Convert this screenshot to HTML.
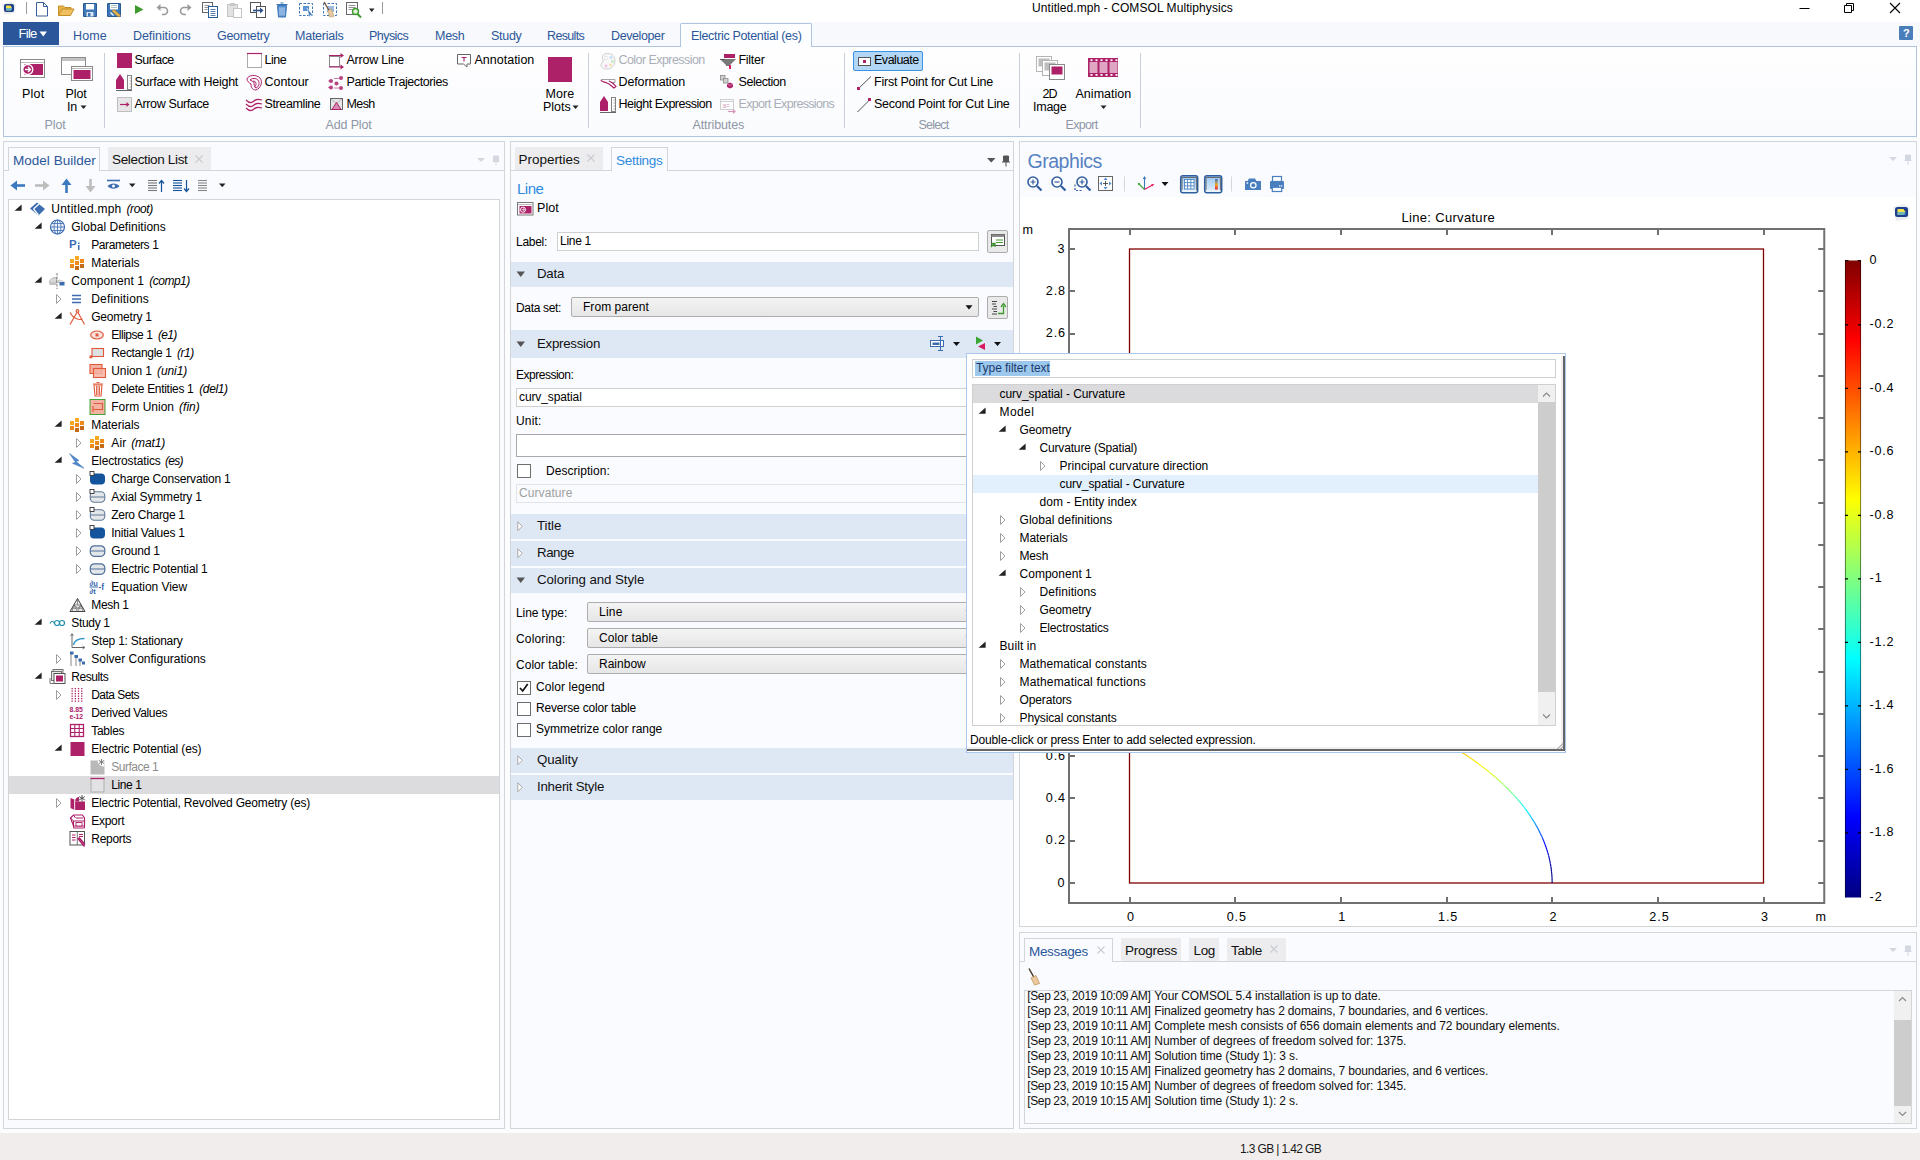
<!DOCTYPE html>
<html><head><meta charset="utf-8"><title>COMSOL</title>
<style>
html,body{margin:0;padding:0;font-family:"Liberation Sans",sans-serif;}
body{width:1920px;height:1160px;overflow:hidden;position:relative;background:#fff;font-family:"Liberation Sans",sans-serif;font-size:12px;color:#000;}
.a{position:absolute;display:block;}
.t{white-space:pre;}
svg{overflow:visible;}
</style></head><body>
<div class="a" style="left:0px;top:0px;width:1920px;height:22px;background:#FFFFFF;"></div>
<div class="a" style="left:0px;top:22px;width:1920px;height:25px;background:#F8F9FC;"></div>
<div class="a" style="left:3px;top:46px;width:1913px;height:90px;background:linear-gradient(#FEFEFF,#FAFBFD);border:1px solid #AEC4DF;box-sizing:border-box;width:1914px;height:91px;"></div>
<div class="a" style="left:0px;top:137px;width:1920px;height:996px;background:#FBFCFE;"></div>
<div class="a" style="left:0px;top:1133px;width:1920px;height:27px;background:#F0EDEC;"></div>
<span class="a t" style="letter-spacing:-0.625px;left:1240px;top:1140.50px;height:16px;line-height:16px;font-size:12px;color:#1a1a1a;">1.3 GB | 1.42 GB</span>
<span class="a t" style="letter-spacing:0.076px;left:1032px;top:0.00px;height:16px;line-height:16px;font-size:12px;color:#000;">Untitled.mph - COMSOL Multiphysics</span>
<svg class="a" style="left:1796px;top:0px;" width="124" height="20" viewBox="0 0 124 20"><path d="M3.5 8.5h10" stroke="#000" stroke-width="1" fill="none"/><path d="M48.5 5.5h7v7h-7z M50.5 5.5v-2h7v7h-2" stroke="#000" stroke-width="1" fill="none"/><path d="M94 3l10 10M104 3l-10 10" stroke="#000" stroke-width="1.1" fill="none"/></svg>
<div class="a" style="left:1899px;top:26px;width:14px;height:14px;background:#4A7EBB;border-radius:1px;"></div>
<span class="a t" style="left:1903px;top:25.50px;height:15px;line-height:15px;font-size:11px;color:#fff;font-weight:bold;">?</span>
<div class="a" style="left:3px;top:141px;width:502px;height:988px;background:#FAFBFE;border:1px solid #D4D5D9;box-sizing:border-box;"></div>
<div class="a" style="left:510px;top:141px;width:504px;height:988px;background:#FAFBFE;border:1px solid #D4D5D9;box-sizing:border-box;"></div>
<div class="a" style="left:1019px;top:141px;width:898px;height:786px;background:#FAFBFE;border:1px solid #D4D5D9;box-sizing:border-box;"></div>
<div class="a" style="left:1019px;top:932px;width:898px;height:197px;background:#FAFBFE;border:1px solid #D4D5D9;box-sizing:border-box;"></div>
<div class="a" style="left:3px;top:22px;width:56px;height:23px;background:#2B579A;"></div>
<span class="a t" style="letter-spacing:-0.718px;left:18.5px;top:25.00px;height:17px;line-height:17px;font-size:13px;color:#fff;">File</span>
<svg class="a" style="left:39px;top:31px;" width="9" height="7" viewBox="0 0 9 7"><path d="M0.5 .5h7.5l-3.750 5z" fill="#fff"/></svg>
<span class="a t" style="letter-spacing:0.152px;left:73px;top:28.25px;height:16.5px;line-height:16.5px;font-size:12.5px;color:#2B579A;">Home</span>
<span class="a t" style="letter-spacing:-0.058px;left:133px;top:28.25px;height:16.5px;line-height:16.5px;font-size:12.5px;color:#2B579A;">Definitions</span>
<span class="a t" style="letter-spacing:-0.299px;left:217px;top:28.25px;height:16.5px;line-height:16.5px;font-size:12.5px;color:#2B579A;">Geometry</span>
<span class="a t" style="letter-spacing:-0.240px;left:295px;top:28.25px;height:16.5px;line-height:16.5px;font-size:12.5px;color:#2B579A;">Materials</span>
<span class="a t" style="letter-spacing:-0.546px;left:369px;top:28.25px;height:16.5px;line-height:16.5px;font-size:12.5px;color:#2B579A;">Physics</span>
<span class="a t" style="letter-spacing:-0.259px;left:435px;top:28.25px;height:16.5px;line-height:16.5px;font-size:12.5px;color:#2B579A;">Mesh</span>
<span class="a t" style="letter-spacing:-0.292px;left:491px;top:28.25px;height:16.5px;line-height:16.5px;font-size:12.5px;color:#2B579A;">Study</span>
<span class="a t" style="letter-spacing:-0.648px;left:547px;top:28.25px;height:16.5px;line-height:16.5px;font-size:12.5px;color:#2B579A;">Results</span>
<span class="a t" style="letter-spacing:-0.398px;left:611px;top:28.25px;height:16.5px;line-height:16.5px;font-size:12.5px;color:#2B579A;">Developer</span>
<div class="a" style="left:680px;top:23px;width:132px;height:24px;background:#FDFEFF;border:1px solid #AEC4DF;box-sizing:border-box;border-bottom:none;border-radius:2px 2px 0 0;"></div>
<span class="a t" style="letter-spacing:-0.332px;left:691px;top:28.25px;height:16.5px;line-height:16.5px;font-size:12.5px;color:#2B579A;">Electric Potential (es)</span>
<div class="a" style="left:104px;top:53px;width:1px;height:75px;background:#C9D0DC;"></div>
<div class="a" style="left:588px;top:53px;width:1px;height:75px;background:#C9D0DC;"></div>
<div class="a" style="left:844px;top:53px;width:1px;height:75px;background:#C9D0DC;"></div>
<div class="a" style="left:1019px;top:53px;width:1px;height:75px;background:#C9D0DC;"></div>
<div class="a" style="left:1140px;top:53px;width:1px;height:75px;background:#C9D0DC;"></div>
<span class="a t" style="letter-spacing:-0.082px;left:44.5px;top:116.75px;height:16.5px;line-height:16.5px;font-size:12.5px;color:#8E97A6;">Plot</span>
<span class="a t" style="letter-spacing:-0.138px;left:325.5px;top:116.75px;height:16.5px;line-height:16.5px;font-size:12.5px;color:#8E97A6;">Add Plot</span>
<span class="a t" style="letter-spacing:-0.113px;left:692.5px;top:116.75px;height:16.5px;line-height:16.5px;font-size:12.5px;color:#8E97A6;">Attributes</span>
<span class="a t" style="letter-spacing:-0.790px;left:918.5px;top:116.75px;height:16.5px;line-height:16.5px;font-size:12.5px;color:#8E97A6;">Select</span>
<span class="a t" style="letter-spacing:-0.668px;left:1065.5px;top:116.75px;height:16.5px;line-height:16.5px;font-size:12.5px;color:#8E97A6;">Export</span>
<span class="a t" style="letter-spacing:0.251px;left:22px;top:85.75px;height:16.5px;line-height:16.5px;font-size:12.5px;color:#000;">Plot</span>
<span class="a t" style="letter-spacing:-0.082px;left:65.5px;top:85.75px;height:16.5px;line-height:16.5px;font-size:12.5px;color:#000;">Plot</span>
<span class="a t" style="letter-spacing:-0.137px;left:67px;top:98.75px;height:16.5px;line-height:16.5px;font-size:12.5px;color:#000;">In</span>
<svg class="a" style="left:80px;top:105px;" width="7" height="5" viewBox="0 0 7 5"><path d="M0.5 0.5h6l-3 3.5z" fill="#222"/></svg>
<span class="a t" style="letter-spacing:0.105px;left:545.5px;top:85.75px;height:16.5px;line-height:16.5px;font-size:12.5px;color:#000;">More</span>
<span class="a t" style="letter-spacing:0.001px;left:543px;top:98.75px;height:16.5px;line-height:16.5px;font-size:12.5px;color:#000;">Plots</span>
<svg class="a" style="left:571.5px;top:105px;" width="7" height="5" viewBox="0 0 7 5"><path d="M0.5 0.5h6l-3 3.5z" fill="#222"/></svg>
<span class="a t" style="letter-spacing:-1.000px;left:1042.5px;top:85.75px;height:16.5px;line-height:16.5px;font-size:12.5px;color:#000;">2D</span>
<span class="a t" style="letter-spacing:-0.238px;left:1033px;top:98.75px;height:16.5px;line-height:16.5px;font-size:12.5px;color:#000;">Image</span>
<span class="a t" style="letter-spacing:0.026px;left:1075.5px;top:85.75px;height:16.5px;line-height:16.5px;font-size:12.5px;color:#000;">Animation</span>
<svg class="a" style="left:1100px;top:105px;" width="7" height="5" viewBox="0 0 7 5"><path d="M0.5 0.5h6l-3 3.5z" fill="#222"/></svg>
<div class="a" style="left:853px;top:51px;width:70px;height:20px;background:#B3D6F5;border:1px solid #3A94E6;box-sizing:border-box;border-radius:2px;"></div>
<span class="a t" style="letter-spacing:-0.549px;left:134.5px;top:51.75px;height:16.5px;line-height:16.5px;font-size:12.5px;color:#000;">Surface</span>
<span class="a t" style="letter-spacing:-0.255px;left:134.5px;top:73.75px;height:16.5px;line-height:16.5px;font-size:12.5px;color:#000;">Surface with Height</span>
<span class="a t" style="letter-spacing:-0.367px;left:134.5px;top:95.75px;height:16.5px;line-height:16.5px;font-size:12.5px;color:#000;">Arrow Surface</span>
<span class="a t" style="letter-spacing:-0.447px;left:264.5px;top:51.75px;height:16.5px;line-height:16.5px;font-size:12.5px;color:#000;">Line</span>
<span class="a t" style="letter-spacing:-0.031px;left:264.5px;top:73.75px;height:16.5px;line-height:16.5px;font-size:12.5px;color:#000;">Contour</span>
<span class="a t" style="letter-spacing:-0.383px;left:264.5px;top:95.75px;height:16.5px;line-height:16.5px;font-size:12.5px;color:#000;">Streamline</span>
<span class="a t" style="letter-spacing:-0.217px;left:346.5px;top:51.75px;height:16.5px;line-height:16.5px;font-size:12.5px;color:#000;">Arrow Line</span>
<span class="a t" style="letter-spacing:-0.398px;left:346.5px;top:73.75px;height:16.5px;line-height:16.5px;font-size:12.5px;color:#000;">Particle Trajectories</span>
<span class="a t" style="letter-spacing:-0.593px;left:346.5px;top:95.75px;height:16.5px;line-height:16.5px;font-size:12.5px;color:#000;">Mesh</span>
<span class="a t" style="letter-spacing:0.002px;left:474.5px;top:51.75px;height:16.5px;line-height:16.5px;font-size:12.5px;color:#000;">Annotation</span>
<span class="a t" style="letter-spacing:-0.559px;left:618.5px;top:51.75px;height:16.5px;line-height:16.5px;font-size:12.5px;color:#A9AEB8;">Color Expression</span>
<span class="a t" style="letter-spacing:-0.129px;left:618.5px;top:73.75px;height:16.5px;line-height:16.5px;font-size:12.5px;color:#000;">Deformation</span>
<span class="a t" style="letter-spacing:-0.478px;left:618.5px;top:95.75px;height:16.5px;line-height:16.5px;font-size:12.5px;color:#000;">Height Expression</span>
<span class="a t" style="letter-spacing:-0.296px;left:738.5px;top:51.75px;height:16.5px;line-height:16.5px;font-size:12.5px;color:#000;">Filter</span>
<span class="a t" style="letter-spacing:-0.455px;left:738.5px;top:73.75px;height:16.5px;line-height:16.5px;font-size:12.5px;color:#000;">Selection</span>
<span class="a t" style="letter-spacing:-0.670px;left:738.5px;top:95.75px;height:16.5px;line-height:16.5px;font-size:12.5px;color:#A9AEB8;">Export Expressions</span>
<span class="a t" style="letter-spacing:-0.220px;left:874px;top:73.75px;height:16.5px;line-height:16.5px;font-size:12.5px;color:#000;">First Point for Cut Line</span>
<span class="a t" style="letter-spacing:-0.277px;left:874px;top:95.75px;height:16.5px;line-height:16.5px;font-size:12.5px;color:#000;">Second Point for Cut Line</span>
<span class="a t" style="letter-spacing:-0.479px;left:874px;top:51.75px;height:16.5px;line-height:16.5px;font-size:12.5px;color:#000;">Evaluate</span>
<svg class="a" style="left:0px;top:0px;" width="400" height="20" viewBox="0 0 400 20"><path d="M2 4.500l9-3 5 3.500-1.500 8-10 1.500z" fill="#E9EAEE"/><rect x="4" y="4" width="10" height="8" rx="2" fill="#1D3F8C"/><path d="M6 5.500h4.500l1.500 2.500-1.500 2.500h-4.500z" fill="#F5E24A"/><path d="M6 8h6v2.500h-6z" fill="#3FA6E0" opacity=".75"/><path d="M26.5 2v12" stroke="#9a9a9a" stroke-width="1"/><path d="M36.5 2.5h7l4 4v9.5h-11z" fill="#fff" stroke="#3A5F9A" stroke-width="1"/><path d="M43.5 2.5v4h4" fill="none" stroke="#3A5F9A"/><path d="M58.5 15.5v-9.5h5l1.5 1.5h6v2" fill="#E9B44C" stroke="#C58F28"/><path d="M58.5 15.5l3.5-6.5h12l-3.5 6.5z" fill="#F0C060" stroke="#C58F28"/><path d="M83.5 3.5h13v13h-13z" fill="#3E78B8" stroke="#2C5C96"/><rect x="86" y="4" width="8" height="5.5" fill="#fff"/><rect x="86.5" y="12" width="7" height="4.5" fill="#DDE6F2"/><rect x="88" y="13" width="2.5" height="3.5" fill="#3E78B8"/><path d="M107.5 3.5h13v13h-13z" fill="#3E78B8" stroke="#2C5C96"/><rect x="110" y="4" width="8" height="5.5" fill="#fff"/><path d="M111 5.5h6M111 7.5h6" stroke="#8aa" stroke-width=".7"/><path d="M112 11l6.5 6 2-1.5-6.5-6z" fill="#E8B34B" stroke="#C58F28" stroke-width=".6"/><path d="M110.5 12.5l3 3" stroke="#fff" stroke-width="1.2"/><path d="M135 5l8.5 4.5-8.5 4.5z" fill="#3D9A2C"/><path d="M158 7.5h6a3.5 3.5 0 0 1 0 7h-2" fill="none" stroke="#9A9A9A" stroke-width="1.6"/><path d="M156.5 7.5l4-3.5v7z" fill="#9A9A9A"/><path d="M190 7.5h-6a3.5 3.5 0 0 0 0 7h2" fill="none" stroke="#9A9A9A" stroke-width="1.6"/><path d="M191.5 7.5l-4-3.5v7z" fill="#9A9A9A"/><rect x="202.500" y="2.500" width="10" height="10" fill="#fff" stroke="#666"/><path d="M204.500 5.500h5M204.500 7.500h5M204.500 9.500h3" stroke="#777" stroke-width=".8"/><rect x="208.500" y="6.500" width="9" height="11" fill="#fff" stroke="#2C5C96"/><path d="M210.500 9.500h5M210.500 11.500h5M210.500 13.500h5M210.500 15.500h5" stroke="#2C5C96" stroke-width=".8"/><rect x="227.500" y="4.500" width="10" height="12" fill="#E2E2E2" stroke="#C4C4C4"/><rect x="230" y="3" width="5" height="3" fill="#C8C8C8"/><rect x="233.500" y="8.500" width="8" height="9" fill="#fff" stroke="#C4C4C4"/><rect x="250.500" y="2.500" width="10" height="10" fill="#fff" stroke="#555"/><rect x="256.500" y="6.500" width="9" height="11" fill="#fff" stroke="#555"/><path d="M253 10.500h8" stroke="#2B4F8A" stroke-width="1.6"/><path d="M260 7.500l3.500 3-3.500 3z" fill="#2B4F8A"/><path d="M277.500 5.500h9l-1 11.500h-7z" fill="#5B93D3" stroke="#3A75B5"/><path d="M276.500 4.500h11M280.500 3h3" stroke="#3A75B5" stroke-width="1.2"/><path d="M280 7.500v8M282 7.500v8M284 7.500v8" stroke="#DCE9F8" stroke-width=".8"/><rect x="299.500" y="3.500" width="13" height="12" fill="none" stroke="#3A75B5" stroke-dasharray="2.5 1.5"/><rect x="303" y="6" width="6" height="5" fill="#5B93D3"/><path d="M307 8l6 7.500-2.500-.5-1 2.500z" fill="#3A75B5" stroke="#fff" stroke-width=".5"/><rect x="323.500" y="3.500" width="13" height="12" fill="none" stroke="#3A75B5" stroke-dasharray="2.5 1.5"/><path d="M327 6h7v6h-7z" fill="#9CBCE4"/><path d="M324 2l6 10" stroke="#7A5A3A" stroke-width="1.4"/><path d="M327.500 11l4-2 2.500 7.500-4.500.5z" fill="#E7C9A0" stroke="#B08A5A" stroke-width=".5"/><rect x="346.500" y="2.500" width="11" height="12" fill="#fff" stroke="#666"/><path d="M348.500 5.500h7M348.500 7.500h7M348.500 9.500h4" stroke="#777" stroke-width=".8"/><circle cx="355.500" cy="11.500" r="3" fill="#DFF2D8" stroke="#3D9A2C" stroke-width="1.4"/><path d="M357.500 14l3.500 3.500" stroke="#3D9A2C" stroke-width="2"/><path d="M369 8.500h5.500l-2.750 3.500z" fill="#222"/><path d="M382.500 2v12" stroke="#9a9a9a" stroke-width="1"/></svg>
<svg class="a" style="left:0px;top:46px;" width="1200" height="90" viewBox="0 46 1200 90"><rect x="20.500" y="59.500" width="24" height="18" fill="#fff" stroke="#8A8A8A"/><path d="M21 62.500h23" stroke="#BDBDBD"/><rect x="24.500" y="64" width="18.500" height="11" fill="#AD2169"/><circle cx="27.800" cy="69.500" r="5" fill="#AD2169" stroke="#fff" stroke-width="1.300"/><path d="M25 69.500h5M28 67l2.500 2.500-2.500 2.500" stroke="#fff" stroke-width="1.400" fill="none"/><rect x="61.500" y="57.500" width="24" height="17" fill="#fff" stroke="#8A8A8A"/><rect x="62" y="58" width="23" height="3" fill="#C2C2C2"/><rect x="71.500" y="66.500" width="21" height="14" fill="#fff" stroke="#8A8A8A"/><path d="M72 68.500h20" stroke="#BDBDBD"/><rect x="73.500" y="70" width="17" height="9" fill="#AD2169"/><rect x="548" y="57" width="24" height="25" fill="#AD2169"/><rect x="1036.500" y="56.500" width="15" height="15" fill="#fff" stroke="#B5B5B5"/><rect x="1038.500" y="58.500" width="11" height="8" fill="#BDBDBD"/><rect x="1042.500" y="60.500" width="15" height="15" fill="#fff" stroke="#B5B5B5"/><rect x="1044.500" y="62.500" width="11" height="8" fill="#BDBDBD"/><rect x="1049.500" y="64.500" width="15" height="15" fill="#fff" stroke="#8A8A8A"/><rect x="1051.500" y="66.500" width="11" height="8" fill="#AD2169"/><rect x="1088" y="58" width="30" height="19" fill="#AD2169"/><rect x="1089.5" y="62" width="8" height="11" fill="#DFA5C3"/><rect x="1099.5" y="62" width="8" height="11" fill="#DFA5C3"/><rect x="1109.5" y="62" width="8" height="11" fill="#DFA5C3"/><rect x="1090.5" y="59.300" width="2" height="1.800" fill="#fff"/><rect x="1090.5" y="74" width="2" height="1.800" fill="#fff"/><rect x="1095.5" y="59.300" width="2" height="1.800" fill="#fff"/><rect x="1095.5" y="74" width="2" height="1.800" fill="#fff"/><rect x="1100.5" y="59.300" width="2" height="1.800" fill="#fff"/><rect x="1100.5" y="74" width="2" height="1.800" fill="#fff"/><rect x="1105.5" y="59.300" width="2" height="1.800" fill="#fff"/><rect x="1105.5" y="74" width="2" height="1.800" fill="#fff"/><rect x="1110.5" y="59.300" width="2" height="1.800" fill="#fff"/><rect x="1110.5" y="74" width="2" height="1.800" fill="#fff"/><rect x="1115.5" y="59.300" width="2" height="1.800" fill="#fff"/><rect x="1115.5" y="74" width="2" height="1.800" fill="#fff"/><rect x="117" y="53" width="15" height="15" fill="#AD2169"/><path d="M116 89v-9l4-6 4 6v9z" fill="#AD2169"/><rect x="127.5" y="75.5" width="4" height="14" fill="#fff" stroke="#777" stroke-width=".9"/><path d="M129.5 78h2M129.5 81h2M129.5 84h2M129.5 87h2" stroke="#777" stroke-width=".6"/><path d="M116 90.5h16" stroke="#666" stroke-width="1"/><rect x="117.500" y="97.500" width="14" height="14" fill="#E6E6E6" stroke="#BFBFBF"/><path d="M120 104.500h8" stroke="#AD2169" stroke-width="1.2"/><path d="M126.500 102l3 2.500-3 2.500z" fill="#AD2169"/><rect x="247.500" y="53.500" width="14" height="14" fill="#fff" stroke="#ABABAB"/><path d="M247 53.500h15" stroke="#AD2169" stroke-width="1.2"/><g fill="none" stroke="#AD2169" stroke-width="1"><path d="M247 79c1-4 9-5 13-1 3 4 1 10-4 12-4 0-5-3-5-6-2-1-4-3-4-5z"/><path d="M250 80c2-2 6-2 8 0 2 3 1 7-2 8-2-1-2-4-2-6z"/><path d="M253 81.500c1-.8 3 0 3 2s-.5 3-1.500 3.500"/></g><g fill="none" stroke="#AD2169" stroke-width="1.2"><path d="M246 100c3 3 6 3 8 1s5-2 8-1"/><path d="M246 104c3 3 6 3 8 1s5-2 8-1"/><path d="M246 108c3 3 6 3 8 1s5-2 8-1"/></g><rect x="329.500" y="56.500" width="10" height="10" fill="#fff" stroke="#8A8A8A"/><path d="M329 55.500h12M329 67h12" stroke="#AD2169" stroke-width="1.2"/><path d="M340.500 53l3.500 2.500-3.500 2.500zM340.500 64.500l3.500 2.500-3.500 2.500z" fill="#AD2169"/><g fill="#AD2169" opacity=".85"><circle cx="331" cy="81" r="2"/><circle cx="341" cy="78" r="2"/><circle cx="336.500" cy="83.500" r="2"/><circle cx="331" cy="87.500" r="2"/><circle cx="341" cy="88" r="2"/></g><path d="M328 81h2M334 78.500h5M328 87.500h2M334 88h5" stroke="#AD2169" stroke-width=".8" opacity=".7"/><rect x="330.500" y="98.500" width="12" height="11" fill="#E6E6E6" stroke="#666"/><path d="M331 99l5.500 4.500 5.500-4.500" fill="none" stroke="#999" stroke-width=".7"/><path d="M332 109.500l4.500-7 4.500 7z" fill="#D98BB2" stroke="#AD2169" stroke-width="1"/><path d="M457.500 54.500h13v9.500h-3.500v3l-3.500-3h-6z" fill="#fff" stroke="#666"/><path d="M461.500 57.500h5M464 57.500v4" stroke="#AD2169" stroke-width="1.100"/><g opacity=".55"><path d="M608 53.500c4 0 7 3 7 7.500 0 5-4 8-8 8-3.500 0-6-1.500-6-4 0-2 2-2 2-4s-1-2.500-.5-4.500 2.500-3 5.500-3z" fill="#F4F4F4" stroke="#AAA"/><circle cx="606" cy="58" r="1.700" fill="#fff" stroke="#BBB" stroke-width=".6"/><circle cx="611" cy="57.500" r="1.400" fill="#9CC8F0"/><circle cx="612.500" cy="61.500" r="1.400" fill="#9AD89A"/><circle cx="610.500" cy="65" r="1.400" fill="#F6C36A"/><circle cx="606" cy="66" r="1.400" fill="#F08ACB"/></g><path d="M601 79.500h14v3h-5" fill="#fff" stroke="#999" stroke-width=".9"/><path d="M601 80c0 1.500 3 2 6 3s5 3.500 7 5l2-1.500c-2-2.500-4-4.500-7-5.500" fill="#fff" stroke="#AD2169" stroke-width="1.200"/><path d="M600 111v-9l4-6 4 6v9z" fill="#AD2169"/><rect x="611.5" y="97.5" width="4" height="14" fill="#fff" stroke="#777" stroke-width=".9"/><path d="M613.5 100h2M613.5 103h2M613.5 106h2M613.5 109h2" stroke="#777" stroke-width=".6"/><path d="M600 112.5h16" stroke="#666" stroke-width="1"/><rect x="724" y="54" width="11" height="4" fill="#AD2169"/><path d="M720 59h16l-6 6v1h-4v-1z" fill="#7A7A7A"/><path d="M720 59.500h5" stroke="#555" stroke-width="1"/><rect x="729" y="65" width="2" height="4" fill="#D81B60"/><g fill="#D0D0D0" stroke="#8A8A8A" stroke-width=".8"><rect x="720.500" y="75.500" width="4.500" height="4.500"/><rect x="723.500" y="78.500" width="4.500" height="4.500"/></g><path d="M727 84l3-1.500 3 1.500v3l-3 1.500-3-1.500z" fill="#AD2169"/><path d="M727 84l3 1.500 3-1.500" fill="none" stroke="#E7A9C7" stroke-width=".6"/><g opacity=".45"><rect x="720.500" y="99.500" width="13" height="10" fill="#fff" stroke="#999"/><path d="M721 101.500h12" stroke="#999"/><text x="722.500" y="108" font-size="6.500" fill="#AD2169" font-family="Liberation Sans">a=</text><path d="M728 111.500h6" stroke="#AD2169" stroke-width="1.200"/><path d="M733 109l3 2.500-3 2.500z" fill="#AD2169"/></g></svg>
<svg class="a" style="left:850px;top:46px;" width="30" height="90" viewBox="850 46 30 90"><rect x="858.500" y="57.500" width="12" height="8" fill="#fff" stroke="#555"/><rect x="863" y="60" width="3" height="3" fill="#AD2169"/><path d="M858.500 88.500l12.500-12" stroke="#555" stroke-width="1"/><rect x="857" y="87" width="3" height="3" fill="#AD2169"/><path d="M857.500 112l12-12" stroke="#555" stroke-width="1"/><rect x="868" y="98" width="3" height="3" fill="#AD2169"/></svg>
<div class="a" style="left:8px;top:147px;width:92px;height:24px;background:#FAFBFE;border:1px solid #D4D5D9;box-sizing:border-box;border-bottom:none;"></div>
<div class="a" style="left:4px;top:170px;width:500px;height:1px;background:#D4D5D9;"></div>
<div class="a" style="left:9px;top:170px;width:90px;height:1px;background:#FAFBFE;"></div>
<span class="a t" style="letter-spacing:0.021px;left:13px;top:152.05px;height:17.5px;line-height:17.5px;font-size:13.5px;color:#2B579A;">Model Builder</span>
<div class="a" style="left:108px;top:147px;width:103px;height:23px;background:#ECECEE;"></div>
<span class="a t" style="letter-spacing:-0.346px;left:112px;top:151.05px;height:17.5px;line-height:17.5px;font-size:13.5px;color:#111;">Selection List</span>
<svg class="a" style="left:194px;top:154px;" width="10" height="10" viewBox="0 0 10 10"><path d="M1.500 1.500l7 7M8.500 1.500l-7 7" stroke="#C9CCD3" stroke-width="1.1"/></svg>
<svg class="a" style="left:476px;top:154px;" width="26" height="12" viewBox="0 0 26 12"><path d="M1 4h8l-4 4z" fill="#D3D7E0"/><path d="M17.500 2h5v5h-5zM16.500 7.500h7M20 7.500v4" stroke="#D3D7E0" fill="#D3D7E0" stroke-width="1"/></svg>
<svg class="a" style="left:0px;top:174px;" width="240" height="24" viewBox="0 174 240 24"><path d="M14 185.500h11" stroke="#3B7ABF" stroke-width="2.600"/><path d="M10.500 185.500l6.500-5v10z" fill="#3B7ABF"/><path d="M35 185.500h11" stroke="#BDBDBD" stroke-width="2.600"/><path d="M49.500 185.500l-6.500-5v10z" fill="#BDBDBD"/><path d="M66.500 182v11" stroke="#3B7ABF" stroke-width="2.600"/><path d="M66.500 178.500l-5 6.500h10z" fill="#3B7ABF"/><path d="M90.500 179v10" stroke="#BDBDBD" stroke-width="2.600"/><path d="M90.500 192.500l-5-6.500h10z" fill="#BDBDBD"/><path d="M107 180.500h13" stroke="#3D6CB0" stroke-width="1.600"/><path d="M107.500 186c3-3.500 9-3.500 12 0-3 3.500-9 3.500-12 0z" fill="#3D6CB0"/><circle cx="113.500" cy="186" r="1.500" fill="#fff"/><path d="M129 183.500h6.500l-3.250 3.800z" fill="#222"/><path d="M148 180.5h9" stroke="#777" stroke-width="1.100"/><path d="M148 183h9" stroke="#777" stroke-width="1.100"/><path d="M148 185.5h9" stroke="#777" stroke-width="1.100"/><path d="M148 188h9" stroke="#777" stroke-width="1.100"/><path d="M148 190.5h9" stroke="#777" stroke-width="1.100"/><path d="M161.500 192v-11M159 183.500l2.500-3 2.500 3" stroke="#14549C" stroke-width="1.200" fill="none"/><path d="M173 180.5h9" stroke="#14549C" stroke-width="1.100"/><path d="M173 183h9" stroke="#14549C" stroke-width="1.100"/><path d="M173 185.5h9" stroke="#14549C" stroke-width="1.100"/><path d="M173 188h9" stroke="#14549C" stroke-width="1.100"/><path d="M173 190.5h9" stroke="#14549C" stroke-width="1.100"/><path d="M186.500 180v11M184 188.500l2.500 3 2.500-3" stroke="#14549C" stroke-width="1.200" fill="none"/><path d="M198 180.5h9" stroke="#888" stroke-width="1.100"/><path d="M198 183h9" stroke="#888" stroke-width="1.100"/><path d="M198 185.5h9" stroke="#888" stroke-width="1.100"/><path d="M198 188h9" stroke="#888" stroke-width="1.100"/><path d="M198 190.5h9" stroke="#888" stroke-width="1.100"/><path d="M219 183.500h6.500l-3.250 3.800z" fill="#222"/></svg>
<div class="a" style="left:8px;top:199px;width:492px;height:921px;background:#fff;border:1px solid #D4D5D9;box-sizing:border-box;"></div>
<div class="a" style="left:9px;top:776px;width:490px;height:18px;background:#DCDCDE;"></div>
<span class="a t" style="letter-spacing:0.243px;left:51.25px;top:201.00px;height:16px;line-height:16px;font-size:12px;color:#000;">Untitled.mph</span>
<span class="a t" style="letter-spacing:-0.374px;left:126.5px;top:201.00px;height:16px;line-height:16px;font-size:12px;color:#000;font-style:italic;">(root)</span>
<span class="a t" style="letter-spacing:0.029px;left:71.25px;top:219.00px;height:16px;line-height:16px;font-size:12px;color:#000;">Global Definitions</span>
<span class="a t" style="letter-spacing:-0.407px;left:91.25px;top:237.00px;height:16px;line-height:16px;font-size:12px;color:#000;">Parameters 1</span>
<span class="a t" style="letter-spacing:-0.048px;left:91.25px;top:255.00px;height:16px;line-height:16px;font-size:12px;color:#000;">Materials</span>
<span class="a t" style="letter-spacing:0.075px;left:71.25px;top:273.00px;height:16px;line-height:16px;font-size:12px;color:#000;">Component 1</span>
<span class="a t" style="letter-spacing:-0.494px;left:149.25px;top:273.00px;height:16px;line-height:16px;font-size:12px;color:#000;font-style:italic;">(comp1)</span>
<span class="a t" style="letter-spacing:0.152px;left:91.25px;top:291.00px;height:16px;line-height:16px;font-size:12px;color:#000;">Definitions</span>
<span class="a t" style="letter-spacing:-0.211px;left:91.25px;top:309.00px;height:16px;line-height:16px;font-size:12px;color:#000;">Geometry 1</span>
<span class="a t" style="letter-spacing:-0.476px;left:111.25px;top:327.00px;height:16px;line-height:16px;font-size:12px;color:#000;">Ellipse 1</span>
<span class="a t" style="letter-spacing:-0.681px;left:158px;top:327.00px;height:16px;line-height:16px;font-size:12px;color:#000;font-style:italic;">(e1)</span>
<span class="a t" style="letter-spacing:-0.325px;left:111.25px;top:345.00px;height:16px;line-height:16px;font-size:12px;color:#000;">Rectangle 1</span>
<span class="a t" style="letter-spacing:-0.457px;left:177px;top:345.00px;height:16px;line-height:16px;font-size:12px;color:#000;font-style:italic;">(r1)</span>
<span class="a t" style="letter-spacing:-0.096px;left:111.25px;top:363.00px;height:16px;line-height:16px;font-size:12px;color:#000;">Union 1</span>
<span class="a t" style="letter-spacing:-0.077px;left:157px;top:363.00px;height:16px;line-height:16px;font-size:12px;color:#000;font-style:italic;">(uni1)</span>
<span class="a t" style="letter-spacing:-0.303px;left:111.25px;top:381.00px;height:16px;line-height:16px;font-size:12px;color:#000;">Delete Entities 1</span>
<span class="a t" style="letter-spacing:-0.377px;left:199.25px;top:381.00px;height:16px;line-height:16px;font-size:12px;color:#000;font-style:italic;">(del1)</span>
<span class="a t" style="letter-spacing:0.012px;left:111.25px;top:399.00px;height:16px;line-height:16px;font-size:12px;color:#000;">Form Union</span>
<span class="a t" style="letter-spacing:0.032px;left:179px;top:399.00px;height:16px;line-height:16px;font-size:12px;color:#000;font-style:italic;">(fin)</span>
<span class="a t" style="letter-spacing:-0.048px;left:91.25px;top:417.00px;height:16px;line-height:16px;font-size:12px;color:#000;">Materials</span>
<span class="a t" style="letter-spacing:0.189px;left:111.25px;top:435.00px;height:16px;line-height:16px;font-size:12px;color:#000;">Air</span>
<span class="a t" style="letter-spacing:-0.124px;left:131.25px;top:435.00px;height:16px;line-height:16px;font-size:12px;color:#000;font-style:italic;">(mat1)</span>
<span class="a t" style="letter-spacing:-0.139px;left:91.25px;top:453.00px;height:16px;line-height:16px;font-size:12px;color:#000;">Electrostatics</span>
<span class="a t" style="letter-spacing:-0.707px;left:165px;top:453.00px;height:16px;line-height:16px;font-size:12px;color:#000;font-style:italic;">(es)</span>
<span class="a t" style="letter-spacing:-0.193px;left:111.25px;top:471.00px;height:16px;line-height:16px;font-size:12px;color:#000;">Charge Conservation 1</span>
<span class="a t" style="letter-spacing:-0.171px;left:111.25px;top:489.00px;height:16px;line-height:16px;font-size:12px;color:#000;">Axial Symmetry 1</span>
<span class="a t" style="letter-spacing:-0.298px;left:111.25px;top:507.00px;height:16px;line-height:16px;font-size:12px;color:#000;">Zero Charge 1</span>
<span class="a t" style="letter-spacing:-0.224px;left:111.25px;top:525.00px;height:16px;line-height:16px;font-size:12px;color:#000;">Initial Values 1</span>
<span class="a t" style="letter-spacing:-0.178px;left:111.25px;top:543.00px;height:16px;line-height:16px;font-size:12px;color:#000;">Ground 1</span>
<span class="a t" style="letter-spacing:-0.150px;left:111.25px;top:561.00px;height:16px;line-height:16px;font-size:12px;color:#000;">Electric Potential 1</span>
<span class="a t" style="letter-spacing:-0.058px;left:111.25px;top:579.00px;height:16px;line-height:16px;font-size:12px;color:#000;">Equation View</span>
<span class="a t" style="letter-spacing:-0.312px;left:91.25px;top:597.00px;height:16px;line-height:16px;font-size:12px;color:#000;">Mesh 1</span>
<span class="a t" style="letter-spacing:-0.317px;left:71.25px;top:615.00px;height:16px;line-height:16px;font-size:12px;color:#000;">Study 1</span>
<span class="a t" style="letter-spacing:-0.226px;left:91.25px;top:633.00px;height:16px;line-height:16px;font-size:12px;color:#000;">Step 1: Stationary</span>
<span class="a t" style="letter-spacing:-0.009px;left:91.25px;top:651.00px;height:16px;line-height:16px;font-size:12px;color:#000;">Solver Configurations</span>
<span class="a t" style="letter-spacing:-0.411px;left:71.25px;top:669.00px;height:16px;line-height:16px;font-size:12px;color:#000;">Results</span>
<span class="a t" style="letter-spacing:-0.550px;left:91.25px;top:687.00px;height:16px;line-height:16px;font-size:12px;color:#000;">Data Sets</span>
<span class="a t" style="letter-spacing:-0.322px;left:91.25px;top:705.00px;height:16px;line-height:16px;font-size:12px;color:#000;">Derived Values</span>
<span class="a t" style="letter-spacing:-0.278px;left:91.25px;top:723.00px;height:16px;line-height:16px;font-size:12px;color:#000;">Tables</span>
<span class="a t" style="letter-spacing:-0.140px;left:91.25px;top:741.00px;height:16px;line-height:16px;font-size:12px;color:#000;">Electric Potential (es)</span>
<span class="a t" style="letter-spacing:-0.478px;left:111.25px;top:759.00px;height:16px;line-height:16px;font-size:12px;color:#8C8C8C;">Surface 1</span>
<span class="a t" style="letter-spacing:-0.381px;left:111.25px;top:777.00px;height:16px;line-height:16px;font-size:12px;color:#000;">Line 1</span>
<span class="a t" style="letter-spacing:-0.172px;left:91.25px;top:795.00px;height:16px;line-height:16px;font-size:12px;color:#000;">Electric Potential, Revolved Geometry (es)</span>
<span class="a t" style="letter-spacing:-0.278px;left:91.25px;top:813.00px;height:16px;line-height:16px;font-size:12px;color:#000;">Export</span>
<span class="a t" style="letter-spacing:-0.289px;left:91.25px;top:831.00px;height:16px;line-height:16px;font-size:12px;color:#000;">Reports</span>
<svg class="a" style="left:9px;top:200px;" width="330" height="660" viewBox="9 200 330 660"><path d="M21.6 204.4v6.400h-7z" fill="#222"/><g transform="translate(29.5,201)"><path d="M.500 7.500l7-6 8 6.500-6.500 6.500z" fill="#3D6CB0"/><path d="M4 8l5.500-5M4 8l5 6" stroke="#fff" stroke-width="1.200"/></g><path d="M41.6 222.4v6.400h-7z" fill="#222"/><g transform="translate(49.5,219)"><circle cx="8" cy="8" r="7" fill="#EAF1FA" stroke="#3D6CB0" stroke-width="1.200"/><path d="M8 1v14M1 8h14M2.500 4.500h11M2.500 11.500h11" stroke="#3D6CB0" stroke-width=".8" fill="none"/><ellipse cx="8" cy="8" rx="3.500" ry="7" fill="none" stroke="#3D6CB0" stroke-width=".8"/></g><g transform="translate(69.5,237)"><text x="-.5" y="11" font-family="Liberation Sans" font-weight="bold" font-size="11.500" fill="#3D6CB0">P</text><rect x="8.500" y="8" width="1.500" height="5" fill="#3D6CB0"/><rect x="8.500" y="5.500" width="1.500" height="1.500" fill="#3D6CB0"/></g><g transform="translate(69.5,255)"><rect x="5.5" y="1" width="4" height="4" fill="#F7A823"/><rect x="0.5" y="4" width="4" height="4" fill="#F7A823"/><rect x="10.5" y="4" width="4" height="4" fill="#F0891C"/><rect x="5.5" y="6" width="4" height="4" fill="#F0891C"/><rect x="0.5" y="9" width="4" height="4" fill="#F0891C"/><rect x="10.5" y="9" width="4" height="4" fill="#C56A16"/><rect x="5.5" y="11" width="4" height="4" fill="#C56A16"/></g><path d="M41.6 276.4v6.400h-7z" fill="#222"/><g transform="translate(49.5,273)"><path d="M0 10c0-4 3-5.500 7-5.500v5.500z" fill="#D8D8D8" stroke="#A8A8A8" stroke-width=".8"/><path d="M0 10h7v2h-7z" fill="#C4C4C4"/><path d="M9 7c3 .3 5.500 1.500 6 3h-6z" fill="#E8E8E8" stroke="#A8A8A8" stroke-width=".6"/><rect x="10" y="9" width="5" height="3.500" fill="#3D6CB0"/><path d="M7.500 0v16" stroke="#555" stroke-width=".8" stroke-dasharray="2.500 1.200"/></g><path d="M56.5 294.5v9l4.500-4.500z" fill="#fff" stroke="#A0A0A0" stroke-width="1"/><g transform="translate(69.5,291)"><path d="M2.500 4.500h9M2.500 8h9M2.500 11.500h9" stroke="#3D6CB0" stroke-width="1.700"/></g><path d="M61.6 312.4v6.400h-7z" fill="#222"/><g transform="translate(69.5,309)"><g fill="none" stroke="#DF5A3A" stroke-width="1.200"><path d="M8 2.500l-7.500 13M8 2.500l7 13M.500 3.500c3 6 9 8 12.500 6.500"/><circle cx="8" cy="2" r="1.300" fill="#fff"/></g></g><g transform="translate(89.5,327)"><ellipse cx="7.500" cy="8" rx="6.300" ry="4" fill="#F6E3DE" stroke="#DF5A3A" stroke-width="1.200"/><rect x="6" y="6.500" width="3" height="3" fill="#DF5A3A"/></g><g transform="translate(89.5,345)"><rect x="2.500" y="3.500" width="11.500" height="8" fill="#DDE1E3" stroke="#DF5A3A" stroke-width="1.100"/><rect x="0" y="10.500" width="2.800" height="2.800" fill="#DF5A3A"/></g><g transform="translate(89.5,363)"><rect x=".5" y="1.500" width="12" height="9" fill="#F4B2A2" stroke="#DF5A3A" stroke-width="1.100"/><rect x="4" y="5.500" width="12" height="9" fill="#F4B2A2" stroke="#DF5A3A" stroke-width="1.100" fill-opacity=".85"/></g><g transform="translate(89.5,381)"><path d="M4.500 4h8l-1 11h-6z" fill="#fff" stroke="#DF5A3A" stroke-width="1.100"/><path d="M3.500 3h10M7 1.500h3" stroke="#DF5A3A" stroke-width="1.200"/><path d="M7 5v9M8.500 5v9M10 5v9" stroke="#DF5A3A" stroke-width=".9"/></g><g transform="translate(89.5,399)"><rect x=".5" y=".5" width="15" height="15" fill="#F4B2A2" stroke="#3FA535" stroke-width="1"/><path d="M4 4.500h9v6.500M3.500 7v6M3.500 10.500h9.500" fill="none" stroke="#DF5A3A" stroke-width="1.100"/></g><path d="M61.6 420.4v6.400h-7z" fill="#222"/><g transform="translate(69.5,417)"><rect x="5.5" y="1" width="4" height="4" fill="#F7A823"/><rect x="0.5" y="4" width="4" height="4" fill="#F7A823"/><rect x="10.5" y="4" width="4" height="4" fill="#F0891C"/><rect x="5.5" y="6" width="4" height="4" fill="#F0891C"/><rect x="0.5" y="9" width="4" height="4" fill="#F0891C"/><rect x="10.5" y="9" width="4" height="4" fill="#C56A16"/><rect x="5.5" y="11" width="4" height="4" fill="#C56A16"/></g><path d="M76.5 438.5v9l4.500-4.500z" fill="#fff" stroke="#A0A0A0" stroke-width="1"/><g transform="translate(89.5,435)"><rect x="5.5" y="1" width="4" height="4" fill="#F7A823"/><rect x="0.5" y="4" width="4" height="4" fill="#F7A823"/><rect x="10.5" y="4" width="4" height="4" fill="#F0891C"/><rect x="5.5" y="6" width="4" height="4" fill="#F0891C"/><rect x="0.5" y="9" width="4" height="4" fill="#F0891C"/><rect x="10.5" y="9" width="4" height="4" fill="#C56A16"/><rect x="5.5" y="11" width="4" height="4" fill="#C56A16"/></g><path d="M61.6 456.4v6.400h-7z" fill="#222"/><g transform="translate(69.5,453)"><path d="M0 .500l9.500 7-3 .800 8 7-11.500-5 3-1z" fill="#4C8AD0" stroke="#3D6CB0" stroke-width=".5"/></g><path d="M76.5 474.5v9l4.500-4.500z" fill="#fff" stroke="#A0A0A0" stroke-width="1"/><g transform="translate(89.5,471)"><rect x=".500" y="2.500" width="15" height="11" rx="4" fill="#14549C"/><rect x=".500" y=".500" width="4" height="4" fill="#fff" stroke="#333" stroke-width=".9"/></g><path d="M76.5 492.5v9l4.500-4.500z" fill="#fff" stroke="#A0A0A0" stroke-width="1"/><g transform="translate(89.5,489)"><rect x=".800" y="2.800" width="14.500" height="10.500" rx="4" fill="#E4E7EA" stroke="#5F7896" stroke-width="1.100"/><path d="M1 8h14" stroke="#5F7896" stroke-width="1"/><rect x=".500" y=".500" width="4" height="4" fill="#fff" stroke="#333" stroke-width=".9"/></g><path d="M76.5 510.5v9l4.500-4.500z" fill="#fff" stroke="#A0A0A0" stroke-width="1"/><g transform="translate(89.5,507)"><rect x=".800" y="2.800" width="14.500" height="10.500" rx="4" fill="#E4E7EA" stroke="#5F7896" stroke-width="1.100"/><path d="M1 8h14" stroke="#5F7896" stroke-width="1"/><rect x=".500" y=".500" width="4" height="4" fill="#fff" stroke="#333" stroke-width=".9"/></g><path d="M76.5 528.5v9l4.500-4.500z" fill="#fff" stroke="#A0A0A0" stroke-width="1"/><g transform="translate(89.5,525)"><rect x=".500" y="2.500" width="15" height="11" rx="4" fill="#14549C"/><rect x=".500" y=".500" width="4" height="4" fill="#fff" stroke="#333" stroke-width=".9"/></g><path d="M76.5 546.5v9l4.500-4.500z" fill="#fff" stroke="#A0A0A0" stroke-width="1"/><g transform="translate(89.5,543)"><rect x=".800" y="2.800" width="14.500" height="10.500" rx="4" fill="#E4E7EA" stroke="#4F6F98" stroke-width="1.200"/><path d="M1 8h14" stroke="#4F6F98" stroke-width="1"/></g><path d="M76.5 564.5v9l4.500-4.500z" fill="#fff" stroke="#A0A0A0" stroke-width="1"/><g transform="translate(89.5,561)"><rect x=".800" y="2.800" width="14.500" height="10.500" rx="4" fill="#E4E7EA" stroke="#4F6F98" stroke-width="1.200"/><path d="M1 8h14" stroke="#4F6F98" stroke-width="1"/></g><g transform="translate(89.5,579)"><text x="0" y="6.800" font-family="Liberation Sans" font-weight="bold" font-size="7.500" fill="#3D6CB0">∂u</text><text x="0" y="15" font-family="Liberation Sans" font-weight="bold" font-size="7.500" fill="#3D6CB0">∂t</text><path d="M0 8h8.500" stroke="#3D6CB0" stroke-width="1"/><text x="9" y="11" font-family="Liberation Sans" font-weight="bold" font-size="8.500" fill="#3D6CB0">-f</text></g><g transform="translate(69.5,597)"><path d="M8 1.500l7.500 13h-15z" fill="#E9E9E9" stroke="#444" stroke-width="1"/><path d="M4.300 8h7.400L8 14.500zM8 1.500v6.500M2.500 11.200h11M4.300 8l-1.800 6.500M11.700 8l1.800 6.500M4.300 8l3.700 3.200 3.700-3.200" fill="none" stroke="#555" stroke-width=".6"/></g><path d="M41.6 618.4v6.400h-7z" fill="#222"/><g transform="translate(49.5,615)"><g fill="none" stroke="#1F8FA8" stroke-width="1.200"><path d="M.500 8.500c1.500-3 3-3 4.500 0"/><circle cx="7.500" cy="8" r="2.500"/><circle cx="12.500" cy="8" r="2.500"/></g></g><g transform="translate(69.5,633)"><path d="M2.500 1v13.500h12.500" fill="none" stroke="#666" stroke-width="1"/><path d="M1 3l1.500-2.500 1.500 2.500M13 13l2.500 1.500-2.500 1.500" fill="none" stroke="#666" stroke-width=".8"/><path d="M4 12c1-5 5-6.500 11-6.500" fill="none" stroke="#2F97C8" stroke-width="1.300"/></g><path d="M56.5 654.5v9l4.500-4.500z" fill="#fff" stroke="#A0A0A0" stroke-width="1"/><g transform="translate(69.5,651)"><path d="M1.500 1v14M6.500 5v10M10.500 8v7" stroke="#888" stroke-width="1"/><rect x=".5" y=".5" width="3.500" height="3" fill="#3D6CB0"/><rect x="5" y="4" width="3.500" height="3" fill="#3D6CB0"/><rect x="9" y="7.500" width="3.500" height="3" fill="#3D6CB0"/><rect x="12.500" y="10.500" width="3" height="3" fill="#3D6CB0"/></g><path d="M41.6 672.4v6.400h-7z" fill="#222"/><g transform="translate(49.5,669)"><rect x="3.500" y=".500" width="10" height="9" fill="#E8E8E8" stroke="#666" stroke-width=".9"/><rect x="2" y="2.500" width="10" height="9" fill="#E8E8E8" stroke="#666" stroke-width=".9"/><rect x="4.500" y="4.500" width="11" height="10" fill="#fff" stroke="#555" stroke-width="1"/><rect x="6.500" y="6.500" width="7" height="6" fill="#AD2169"/><path d="M.500 9v5.500h5" fill="none" stroke="#666" stroke-width=".9"/></g><path d="M56.5 690.5v9l4.500-4.500z" fill="#fff" stroke="#A0A0A0" stroke-width="1"/><g transform="translate(69.5,687)"><rect x="2" y="1" width="1.300" height="1.300" fill="#AD2169"/><rect x="2" y="3.5" width="1.300" height="1.300" fill="#AD2169"/><rect x="2" y="6" width="1.300" height="1.300" fill="#AD2169"/><rect x="2" y="8.5" width="1.300" height="1.300" fill="#AD2169"/><rect x="2" y="11" width="1.300" height="1.300" fill="#AD2169"/><rect x="2" y="13.5" width="1.300" height="1.300" fill="#AD2169"/><rect x="5.2" y="1" width="1.300" height="1.300" fill="#AD2169"/><rect x="5.2" y="3.5" width="1.300" height="1.300" fill="#AD2169"/><rect x="5.2" y="6" width="1.300" height="1.300" fill="#AD2169"/><rect x="5.2" y="8.5" width="1.300" height="1.300" fill="#AD2169"/><rect x="5.2" y="11" width="1.300" height="1.300" fill="#AD2169"/><rect x="5.2" y="13.5" width="1.300" height="1.300" fill="#AD2169"/><rect x="8.4" y="1" width="1.300" height="1.300" fill="#AD2169"/><rect x="8.4" y="3.5" width="1.300" height="1.300" fill="#AD2169"/><rect x="8.4" y="6" width="1.300" height="1.300" fill="#AD2169"/><rect x="8.4" y="8.5" width="1.300" height="1.300" fill="#AD2169"/><rect x="8.4" y="11" width="1.300" height="1.300" fill="#AD2169"/><rect x="8.4" y="13.5" width="1.300" height="1.300" fill="#AD2169"/><rect x="11.6" y="1" width="1.300" height="1.300" fill="#AD2169"/><rect x="11.6" y="3.5" width="1.300" height="1.300" fill="#AD2169"/><rect x="11.6" y="6" width="1.300" height="1.300" fill="#AD2169"/><rect x="11.6" y="8.5" width="1.300" height="1.300" fill="#AD2169"/><rect x="11.6" y="11" width="1.300" height="1.300" fill="#AD2169"/><rect x="11.6" y="13.5" width="1.300" height="1.300" fill="#AD2169"/></g><g transform="translate(69.5,705)"><text x="0" y="7" font-family="Liberation Sans" font-weight="bold" font-size="6.800" fill="#AD2169">8.85</text><text x="0" y="13.500" font-family="Liberation Sans" font-weight="bold" font-size="6.800" fill="#AD2169">e-12</text></g><g transform="translate(69.5,723)"><rect x="1" y="1.500" width="13" height="12" fill="#fff" stroke="#AD2169" stroke-width="1.300"/><path d="M1 5.500h13M1 9.500h13M5.300 1.500v12M9.700 1.500v12" stroke="#AD2169" stroke-width="1.100"/></g><path d="M61.6 744.4v6.400h-7z" fill="#222"/><g transform="translate(69.5,741)"><rect x="1" y="1" width="14" height="14" fill="#AD2169"/></g><g transform="translate(89.5,759)"><rect x="1" y="1.500" width="14" height="14" fill="#B9B9B9"/><path d="M8 1.500h7v6c-4 0-7-2.500-7-6z" fill="#fff"/><path d="M12 0v6M9.400 1.500l5.200 3M14.600 1.500l-5.200 3" stroke="#777" stroke-width=".9"/></g><g transform="translate(89.5,777)"><rect x="1.500" y="1.500" width="13" height="13.500" fill="#E2E2E4" stroke="#AFAFAF" stroke-width="1"/><path d="M1 1.500h14" stroke="#AD2169" stroke-width="1.300"/></g><path d="M56.5 798.5v9l4.500-4.500z" fill="#fff" stroke="#A0A0A0" stroke-width="1"/><g transform="translate(69.5,795)"><path d="M1 3l4 1.500v10.500l-4-2z" fill="#AD2169"/><path d="M5.500 6.500h10v8.500h-10z" fill="#AD2169"/><path d="M5.500 6.500c0-3 2-4.500 4-4.500v4.500z" fill="#AD2169"/><path d="M12.500 0v6.500M9.700 1.600l5.600 3.300M15.300 1.600l-5.600 3.300" stroke="#444" stroke-width=".9"/><path d="M5.200 4.500v10.500" stroke="#fff" stroke-width=".7"/></g><g transform="translate(69.5,813)"><path d="M1 5l3-3h9l2 3v8h-11z" fill="#fff" stroke="#AD2169" stroke-width="1.200"/><path d="M1 5l3 3h11M4 8v7h11v-2M4 2l2 3M6.500 5h7" fill="none" stroke="#AD2169" stroke-width="1"/><rect x="6.500" y="9.500" width="6" height="3.500" fill="#fff" stroke="#AD2169" stroke-width=".9"/></g><g transform="translate(69.5,831)"><rect x=".500" y=".500" width="14.500" height="13.500" fill="#fff" stroke="#555" stroke-width="1"/><path d="M7.800 .500v13.500" stroke="#555" stroke-width=".8"/><path d="M2.500 4h3.500M2.500 6.500h3.500M2.500 9h3.500M9.500 3.500h4M9.500 5.500h4" stroke="#AD2169" stroke-width="1"/><path d="M8 7l7 8.500M9.500 6.500l6 7" stroke="#AD2169" stroke-width="1.400"/></g></svg>
<div class="a" style="left:515px;top:147px;width:88px;height:23px;background:#ECECEE;"></div>
<span class="a t" style="letter-spacing:-0.026px;left:518.5px;top:151.25px;height:17.5px;line-height:17.5px;font-size:13.5px;color:#111;">Properties</span>
<svg class="a" style="left:586px;top:153px;" width="10" height="10" viewBox="0 0 10 10"><path d="M1.500 1.500l7 7M8.500 1.500l-7 7" stroke="#C9CCD3" stroke-width="1.100"/></svg>
<div class="a" style="left:511px;top:170px;width:502px;height:1px;background:#D4D5D9;"></div>
<div class="a" style="left:611px;top:147px;width:57px;height:24px;background:#FAFBFE;border:1px solid #D4D5D9;box-sizing:border-box;border-bottom:none;"></div>
<span class="a t" style="letter-spacing:-0.283px;left:616px;top:152.25px;height:17.5px;line-height:17.5px;font-size:13.5px;color:#2E8BE0;">Settings</span>
<svg class="a" style="left:984px;top:154px;" width="28" height="14" viewBox="0 0 28 14"><path d="M3 4h8.500l-4.250 4.500z" fill="#555"/><path d="M19.500 2h5v5.500h-5zM18 8h8M22 8v4.500" stroke="#555" fill="#555" stroke-width="1"/></svg>
<span class="a t" style="letter-spacing:-0.520px;left:517px;top:178.50px;height:19px;line-height:19px;font-size:15px;color:#2E8BE0;">Line</span>
<svg class="a" style="left:517px;top:202px;" width="17" height="14" viewBox="0 0 17 14"><rect x=".500" y=".500" width="15.500" height="12.500" fill="#fff" stroke="#777"/><path d="M1 2.500h15" stroke="#BBB"/><rect x="2.500" y="4" width="12" height="7.500" fill="#AD2169"/><circle cx="6" cy="7.700" r="2.600" fill="#AD2169" stroke="#fff" stroke-width=".9"/><path d="M4.500 7.700h2.800M6.300 6.500l1.300 1.200-1.300 1.200" stroke="#fff" stroke-width=".8" fill="none"/></svg>
<span class="a t" style="letter-spacing:0.084px;left:537px;top:199.75px;height:16.5px;line-height:16.5px;font-size:12.5px;color:#000;">Plot</span>
<span class="a t" style="letter-spacing:-0.281px;left:516px;top:233.50px;height:16px;line-height:16px;font-size:12px;color:#000;">Label:</span>
<div class="a" style="left:557px;top:232px;width:422px;height:19px;background:#fff;border:1px solid #D0D0D0;box-sizing:border-box;"></div>
<span class="a t" style="letter-spacing:-0.281px;left:560px;top:232.50px;height:16px;line-height:16px;font-size:12px;color:#000;">Line 1</span>
<div class="a" style="left:987px;top:230px;width:21px;height:23px;background:#E9E9E9;border:1px solid #ADADAD;box-sizing:border-box;border-radius:2px;"></div>
<svg class="a" style="left:990px;top:233px;" width="16" height="16" viewBox="0 0 16 16"><rect x="1.500" y="1.500" width="13" height="11" fill="#fff" stroke="#555"/><rect x="1.500" y="1.500" width="13" height="2.500" fill="#8A8A8A"/><path d="M6 7h7M6 9.500h7" stroke="#3D9A2C" stroke-width="1.100"/><path d="M1 14l3.500-3.500M1.500 10.500h3.500v3.500" stroke="#3D9A2C" stroke-width="1.300" fill="none"/></svg>
<div class="a" style="left:511px;top:262px;width:502px;height:25px;background:#DEE8F5;"></div>
<svg class="a" style="left:516px;top:271.0px;" width="10" height="7" viewBox="0 0 10 7"><path d="M.500 .500h8.500l-4.250 5.500z" fill="#555"/></svg>
<span class="a t" style="letter-spacing:-0.265px;left:537px;top:265.10px;height:17.3px;line-height:17.3px;font-size:13.3px;color:#111;">Data</span>
<span class="a t" style="letter-spacing:-0.341px;left:516px;top:299.50px;height:16px;line-height:16px;font-size:12px;color:#000;">Data set:</span>
<div class="a" style="left:571px;top:297px;width:408px;height:20px;background:linear-gradient(#F4F4F4,#E6E6E6);border:1px solid #ADADAD;box-sizing:border-box;border-radius:2px;"></div>
<span class="a t" style="letter-spacing:0.044px;left:583px;top:298.50px;height:16px;line-height:16px;font-size:12px;color:#000;">From parent</span>
<svg class="a" style="left:965px;top:304.5px;" width="8" height="5" viewBox="0 0 8 5"><path d="M.500 .300h7l-3.500 4.200z" fill="#111"/></svg>
<div class="a" style="left:987px;top:296px;width:21px;height:23px;background:#E9E9E9;border:1px solid #ADADAD;box-sizing:border-box;border-radius:2px;"></div>
<svg class="a" style="left:990px;top:299px;" width="16" height="17" viewBox="0 0 16 17"><path d="M2 2.500h5M2 5h4M3.500 7.500h3.500M2 10h5M3.500 12.500h3.500M2 15h5" stroke="#444" stroke-width="1"/><path d="M8 14.500h5.500v-8" fill="none" stroke="#3D9A2C" stroke-width="1.300"/><path d="M11 8l2.500-3.500 2.500 3.500" fill="none" stroke="#3D9A2C" stroke-width="1.300"/></svg>
<div class="a" style="left:511px;top:330px;width:502px;height:28px;background:#DEE8F5;"></div>
<svg class="a" style="left:516px;top:340.5px;" width="10" height="7" viewBox="0 0 10 7"><path d="M.500 .500h8.500l-4.250 5.500z" fill="#555"/></svg>
<span class="a t" style="letter-spacing:-0.276px;left:537px;top:334.60px;height:17.3px;line-height:17.3px;font-size:13.3px;color:#111;">Expression</span>
<svg class="a" style="left:928px;top:334px;" width="80" height="20" viewBox="0 0 80 20"><rect x="2.500" y="6.500" width="13" height="6" fill="#fff" stroke="#3D6CB0" stroke-width="1"/><rect x="4.500" y="8.500" width="7" height="2.500" fill="#3D6CB0"/><path d="M12.500 2.500v14M10 2.500h5M10 16.500h5" stroke="#3D6CB0" stroke-width="1" fill="none"/><path d="M25 8h7l-3.500 4z" fill="#111"/><path d="M48 2.500l7 4-7 4z" fill="#3DA535"/><path d="M57 9l-7 3.500 7 3.500z" fill="#D81B60"/><path d="M66 8h7l-3.500 4z" fill="#111"/></svg>
<span class="a t" style="letter-spacing:-0.490px;left:516px;top:367.00px;height:16px;line-height:16px;font-size:12px;color:#000;">Expression:</span>
<div class="a" style="left:516px;top:388px;width:470px;height:19px;background:#fff;border:1px solid #D0D0D0;box-sizing:border-box;"></div>
<span class="a t" style="letter-spacing:-0.112px;left:519px;top:389.00px;height:16px;line-height:16px;font-size:12px;color:#000;">curv_spatial</span>
<span class="a t" style="letter-spacing:0.153px;left:516px;top:412.50px;height:16px;line-height:16px;font-size:12px;color:#000;">Unit:</span>
<div class="a" style="left:516px;top:434px;width:470px;height:23px;background:#fff;border:1px solid #A9A9A9;box-sizing:border-box;"></div>
<div class="a" style="left:517px;top:464px;width:14px;height:14px;background:#fff;border:1px solid #6E6E6E;box-sizing:border-box;"></div>
<span class="a t" style="letter-spacing:0.040px;left:546px;top:462.80px;height:16px;line-height:16px;font-size:12px;color:#000;">Description:</span>
<div class="a" style="left:516px;top:484px;width:470px;height:19px;background:#FAFBFE;border:1px solid #E3E4E8;box-sizing:border-box;"></div>
<span class="a t" style="letter-spacing:0.077px;left:519px;top:484.80px;height:16px;line-height:16px;font-size:12px;color:#A0A0A0;">Curvature</span>
<div class="a" style="left:511px;top:514px;width:502px;height:25px;background:#DEE8F5;"></div>
<svg class="a" style="left:517px;top:521.0px;" width="7" height="11" viewBox="0 0 7 11"><path d="M.800 .800v9l4.500-4.500z" fill="#fff" stroke="#A8A8A8" stroke-width="1"/></svg>
<span class="a t" style="letter-spacing:-0.085px;left:537px;top:517.10px;height:17.3px;line-height:17.3px;font-size:13.3px;color:#111;">Title</span>
<div class="a" style="left:511px;top:541px;width:502px;height:25px;background:#DEE8F5;"></div>
<svg class="a" style="left:517px;top:548.0px;" width="7" height="11" viewBox="0 0 7 11"><path d="M.800 .800v9l4.500-4.500z" fill="#fff" stroke="#A8A8A8" stroke-width="1"/></svg>
<span class="a t" style="letter-spacing:-0.472px;left:537px;top:544.10px;height:17.3px;line-height:17.3px;font-size:13.3px;color:#111;">Range</span>
<div class="a" style="left:511px;top:568px;width:502px;height:25px;background:#DEE8F5;"></div>
<svg class="a" style="left:516px;top:577.0px;" width="10" height="7" viewBox="0 0 10 7"><path d="M.500 .500h8.500l-4.250 5.500z" fill="#555"/></svg>
<span class="a t" style="letter-spacing:-0.080px;left:537px;top:571.10px;height:17.3px;line-height:17.3px;font-size:13.3px;color:#111;">Coloring and Style</span>
<span class="a t" style="letter-spacing:-0.083px;left:516px;top:605.00px;height:16px;line-height:16px;font-size:12px;color:#000;">Line type:</span>
<div class="a" style="left:587px;top:602px;width:392px;height:20px;background:linear-gradient(#F4F4F4,#E6E6E6);border:1px solid #ADADAD;box-sizing:border-box;border-radius:2px;"></div>
<span class="a t" style="letter-spacing:0.204px;left:599px;top:603.50px;height:16px;line-height:16px;font-size:12px;color:#000;">Line</span>
<svg class="a" style="left:965px;top:609.5px;" width="8" height="5" viewBox="0 0 8 5"><path d="M.500 .300h7l-3.500 4.200z" fill="#111"/></svg>
<span class="a t" style="letter-spacing:0.159px;left:516px;top:631.00px;height:16px;line-height:16px;font-size:12px;color:#000;">Coloring:</span>
<div class="a" style="left:587px;top:628px;width:392px;height:20px;background:linear-gradient(#F4F4F4,#E6E6E6);border:1px solid #ADADAD;box-sizing:border-box;border-radius:2px;"></div>
<span class="a t" style="letter-spacing:0.077px;left:599px;top:629.50px;height:16px;line-height:16px;font-size:12px;color:#000;">Color table</span>
<svg class="a" style="left:965px;top:635.5px;" width="8" height="5" viewBox="0 0 8 5"><path d="M.500 .300h7l-3.500 4.200z" fill="#111"/></svg>
<span class="a t" style="letter-spacing:0.039px;left:516px;top:657.00px;height:16px;line-height:16px;font-size:12px;color:#000;">Color table:</span>
<div class="a" style="left:587px;top:654px;width:392px;height:20px;background:linear-gradient(#F4F4F4,#E6E6E6);border:1px solid #ADADAD;box-sizing:border-box;border-radius:2px;"></div>
<span class="a t" style="letter-spacing:0.016px;left:599px;top:655.50px;height:16px;line-height:16px;font-size:12px;color:#000;">Rainbow</span>
<svg class="a" style="left:965px;top:661.5px;" width="8" height="5" viewBox="0 0 8 5"><path d="M.500 .300h7l-3.500 4.200z" fill="#111"/></svg>
<div class="a" style="left:517px;top:681px;width:14px;height:14px;background:#fff;border:1px solid #6E6E6E;box-sizing:border-box;"></div>
<svg class="a" style="left:517px;top:681px;" width="14" height="14" viewBox="0 0 14 14"><path d="M3 7l2.700 3 5-7" stroke="#111" stroke-width="1.700" fill="none"/></svg>
<span class="a t" style="letter-spacing:0.068px;left:536px;top:679.00px;height:16px;line-height:16px;font-size:12px;color:#000;">Color legend</span>
<div class="a" style="left:517px;top:702px;width:14px;height:14px;background:#fff;border:1px solid #6E6E6E;box-sizing:border-box;"></div>
<span class="a t" style="letter-spacing:-0.172px;left:536px;top:700.00px;height:16px;line-height:16px;font-size:12px;color:#000;">Reverse color table</span>
<div class="a" style="left:517px;top:723px;width:14px;height:14px;background:#fff;border:1px solid #6E6E6E;box-sizing:border-box;"></div>
<span class="a t" style="letter-spacing:-0.020px;left:536px;top:721.00px;height:16px;line-height:16px;font-size:12px;color:#000;">Symmetrize color range</span>
<div class="a" style="left:511px;top:748px;width:502px;height:25px;background:#DEE8F5;"></div>
<svg class="a" style="left:517px;top:755.0px;" width="7" height="11" viewBox="0 0 7 11"><path d="M.800 .800v9l4.500-4.500z" fill="#fff" stroke="#A8A8A8" stroke-width="1"/></svg>
<span class="a t" style="letter-spacing:-0.098px;left:537px;top:751.10px;height:17.3px;line-height:17.3px;font-size:13.3px;color:#111;">Quality</span>
<div class="a" style="left:511px;top:775px;width:502px;height:25px;background:#DEE8F5;"></div>
<svg class="a" style="left:517px;top:782.0px;" width="7" height="11" viewBox="0 0 7 11"><path d="M.800 .800v9l4.500-4.500z" fill="#fff" stroke="#A8A8A8" stroke-width="1"/></svg>
<span class="a t" style="letter-spacing:-0.243px;left:537px;top:778.10px;height:17.3px;line-height:17.3px;font-size:13.3px;color:#111;">Inherit Style</span>
<div class="a" style="left:1020px;top:197px;width:896px;height:729px;background:#fff;"></div>
<span class="a t" style="letter-spacing:-0.462px;left:1027.5px;top:148.00px;height:26px;line-height:26px;font-size:19.5px;color:#5682C2;">Graphics</span>
<svg class="a" style="left:1888px;top:153px;" width="26" height="14" viewBox="0 0 26 14"><path d="M1 4h8l-4 4z" fill="#D3D7E0"/><path d="M17.500 2h5v5h-5zM16.500 7.500h7M20 7.500v4.500" stroke="#D3D7E0" fill="#D3D7E0" stroke-width="1"/></svg>
<svg class="a" style="left:1020px;top:172px;" width="280" height="24" viewBox="1020 172 280 24"><circle cx="1033" cy="182" r="5" fill="#fff" stroke="#2F5E9E" stroke-width="1.600"/><path d="M1037 186l4.500 4.500" stroke="#2F5E9E" stroke-width="2.200"/><path d="M1030.500 182h5M1033 179.500v5" stroke="#2F5E9E" stroke-width="1.200"/><circle cx="1057" cy="182" r="5" fill="#fff" stroke="#2F5E9E" stroke-width="1.600"/><path d="M1061 186l4.500 4.500" stroke="#2F5E9E" stroke-width="2.200"/><path d="M1054.500 182h5" stroke="#2F5E9E" stroke-width="1.200"/><path d="M1075 184.500v6h7" fill="none" stroke="#2F5E9E" stroke-width="1.200" stroke-dasharray="2 1.500"/><circle cx="1082" cy="182" r="5" fill="#fff" stroke="#2F5E9E" stroke-width="1.600"/><path d="M1086 186l4.500 4.500" stroke="#2F5E9E" stroke-width="2.200"/><path d="M1079.500 182h5M1082 179.500v5" stroke="#2F5E9E" stroke-width="1.200"/><rect x="1098.500" y="176.500" width="14" height="14" fill="#fff" stroke="#666"/><path d="M1103 183.500h5M1105.500 181v5" stroke="#555" stroke-width="1"/><path d="M1105.500 177.500l-2 2.500h4zM1105.500 189.500l-2-2.500h4zM1099.500 183.500l2.500-2v4zM1111.500 183.500l-2.500-2v4z" fill="#4C8AD0"/><path d="M1124.500 176.500v15" stroke="#D5D8E0"/><path d="M1144.500 178v11.500" stroke="#3F78BF" stroke-width="1.100"/><path d="M1144.500 189.500l-5.500-5.500" stroke="#3DA535" stroke-width="1.100"/><path d="M1144.500 189.500l8-4.500" stroke="#E0185E" stroke-width="1.100"/><path d="M1144.500 176l-1.800 3h3.600z" fill="#3F78BF"/><path d="M1137.800 182.800l.4 2.800 2.300-2.200z" fill="#3DA535"/><path d="M1154.300 184l-3.200.2 1.400 2.400z" fill="#E0185E"/><path d="M1161.500 182h7l-3.500 4z" fill="#111"/><defs><linearGradient id="tg" x1="0" y1="0" x2="0" y2="1"><stop offset="0" stop-color="#9AC6F1"/><stop offset="1" stop-color="#E6F2FD"/></linearGradient><linearGradient id="lg1" x1="0" y1="0" x2="0" y2="1"><stop offset="0" stop-color="#3F6FC0"/><stop offset=".3" stop-color="#9A9A70"/><stop offset=".55" stop-color="#F2A020"/><stop offset="1" stop-color="#E02030"/></linearGradient></defs><rect x="1180.7" y="175.700" width="17" height="17" rx="2.200" fill="url(#tg)" stroke="#2F5E9E" stroke-width="1.500"/><path d="M1182 190.500v-13h14.400v13" fill="none" stroke="#6A6A6A" stroke-width="1"/><path d="M1181.7 191h15" stroke="#fff" stroke-width="1" opacity=".8"/><rect x="1204.7" y="175.700" width="17" height="17" rx="2.200" fill="url(#tg)" stroke="#2F5E9E" stroke-width="1.500"/><path d="M1206 190.500v-13h14.400v13" fill="none" stroke="#6A6A6A" stroke-width="1"/><path d="M1205.7 191h15" stroke="#fff" stroke-width="1" opacity=".8"/><rect x="1184" y="179" width="10.500" height="10.500" fill="#4A84C4"/><rect x="1184.9" y="179.9" width="2.300" height="2.300" fill="#fff"/><rect x="1184.9" y="183.1" width="2.300" height="2.300" fill="#fff"/><rect x="1184.9" y="186.3" width="2.300" height="2.300" fill="#fff"/><rect x="1188.1" y="179.9" width="2.300" height="2.300" fill="#fff"/><rect x="1188.1" y="183.1" width="2.300" height="2.300" fill="#fff"/><rect x="1188.1" y="186.3" width="2.300" height="2.300" fill="#fff"/><rect x="1191.3" y="179.9" width="2.300" height="2.300" fill="#fff"/><rect x="1191.3" y="183.1" width="2.300" height="2.300" fill="#fff"/><rect x="1191.3" y="186.3" width="2.300" height="2.300" fill="#fff"/><rect x="1215" y="179" width="2.800" height="10.500" fill="url(#lg1)"/><path d="M1231.500 176.500v15" stroke="#D5D8E0"/><path d="M1245 181h2.500l1.500-2.500h6l1.500 2.500h4.500v9h-16z" fill="#4A7FBF"/><circle cx="1253.300" cy="185.300" r="3.300" fill="#fff"/><circle cx="1253.300" cy="185.300" r="2" fill="#4A7FBF"/><rect x="1246.500" y="182.300" width="1.600" height="1.400" fill="#fff"/><rect x="1272.500" y="176.500" width="9" height="5" fill="#fff" stroke="#4A7FBF" stroke-width="1.200"/><rect x="1270" y="181" width="14" height="8" rx="1" fill="#4A7FBF"/><rect x="1272.300" y="187.300" width="9.400" height="4.200" fill="#fff" stroke="#4A7FBF" stroke-width="1.200"/><rect x="1279" y="185.300" width="1.300" height="1.200" fill="#fff"/><rect x="1281" y="185.300" width="1.300" height="1.200" fill="#fff"/></svg>
<svg class="a" style="left:1020px;top:196px;" width="896" height="730" viewBox="1020 196 896 730"><rect x="1069" y="229" width="755.250" height="674" fill="none" stroke="#707070" stroke-width="2"/><path d="M1130.00 229v6M1130.00 903v-6" stroke="#707070" stroke-width="2"/><path d="M1235.00 229v6M1235.00 903v-6" stroke="#707070" stroke-width="2"/><path d="M1341.00 229v6M1341.00 903v-6" stroke="#707070" stroke-width="2"/><path d="M1447.00 229v6M1447.00 903v-6" stroke="#707070" stroke-width="2"/><path d="M1552.00 229v6M1552.00 903v-6" stroke="#707070" stroke-width="2"/><path d="M1658.00 229v6M1658.00 903v-6" stroke="#707070" stroke-width="2"/><path d="M1764.00 229v6M1764.00 903v-6" stroke="#707070" stroke-width="2"/><path d="M1069 883.00h6M1824.250 883.00h-6" stroke="#707070" stroke-width="2"/><path d="M1069 841.00h6M1824.250 841.00h-6" stroke="#707070" stroke-width="2"/><path d="M1069 798.00h6M1824.250 798.00h-6" stroke="#707070" stroke-width="2"/><path d="M1069 756.00h6M1824.250 756.00h-6" stroke="#707070" stroke-width="2"/><path d="M1069 714.00h6M1824.250 714.00h-6" stroke="#707070" stroke-width="2"/><path d="M1069 672.00h6M1824.250 672.00h-6" stroke="#707070" stroke-width="2"/><path d="M1069 629.00h6M1824.250 629.00h-6" stroke="#707070" stroke-width="2"/><path d="M1069 587.00h6M1824.250 587.00h-6" stroke="#707070" stroke-width="2"/><path d="M1069 545.00h6M1824.250 545.00h-6" stroke="#707070" stroke-width="2"/><path d="M1069 503.00h6M1824.250 503.00h-6" stroke="#707070" stroke-width="2"/><path d="M1069 460.00h6M1824.250 460.00h-6" stroke="#707070" stroke-width="2"/><path d="M1069 418.00h6M1824.250 418.00h-6" stroke="#707070" stroke-width="2"/><path d="M1069 376.00h6M1824.250 376.00h-6" stroke="#707070" stroke-width="2"/><path d="M1069 334.00h6M1824.250 334.00h-6" stroke="#707070" stroke-width="2"/><path d="M1069 291.00h6M1824.250 291.00h-6" stroke="#707070" stroke-width="2"/><path d="M1069 249.00h6M1824.250 249.00h-6" stroke="#707070" stroke-width="2"/><rect x="1129.50" y="249.01" width="633.99" height="633.99" fill="none" stroke="#800000" stroke-width="1.300"/><path d="M1552.16 883.00L1552.12 880.23" stroke="#000080" stroke-width="1.150" stroke-linecap="butt"/><path d="M1552.12 880.23L1552.02 877.47" stroke="#000081" stroke-width="1.150" stroke-linecap="butt"/><path d="M1552.02 877.47L1551.83 874.70" stroke="#000085" stroke-width="1.150" stroke-linecap="butt"/><path d="M1551.83 874.70L1551.58 871.94" stroke="#000089" stroke-width="1.150" stroke-linecap="butt"/><path d="M1551.58 871.94L1551.26 869.18" stroke="#00008F" stroke-width="1.150" stroke-linecap="butt"/><path d="M1551.26 869.18L1550.86 866.42" stroke="#000097" stroke-width="1.150" stroke-linecap="butt"/><path d="M1550.86 866.42L1550.39 863.66" stroke="#0000A0" stroke-width="1.150" stroke-linecap="butt"/><path d="M1550.39 863.66L1549.84 860.91" stroke="#0000AA" stroke-width="1.150" stroke-linecap="butt"/><path d="M1549.84 860.91L1549.23 858.16" stroke="#0000B6" stroke-width="1.150" stroke-linecap="butt"/><path d="M1549.23 858.16L1548.54 855.42" stroke="#0000C2" stroke-width="1.150" stroke-linecap="butt"/><path d="M1548.54 855.42L1547.79 852.68" stroke="#0000D0" stroke-width="1.150" stroke-linecap="butt"/><path d="M1547.79 852.68L1546.96 849.94" stroke="#0000DF" stroke-width="1.150" stroke-linecap="butt"/><path d="M1546.96 849.94L1546.06 847.21" stroke="#0000EE" stroke-width="1.150" stroke-linecap="butt"/><path d="M1546.06 847.21L1545.08 844.49" stroke="#0000FF" stroke-width="1.150" stroke-linecap="butt"/><path d="M1545.08 844.49L1544.04 841.77" stroke="#0011FF" stroke-width="1.150" stroke-linecap="butt"/><path d="M1544.04 841.77L1542.92 839.06" stroke="#0022FF" stroke-width="1.150" stroke-linecap="butt"/><path d="M1542.92 839.06L1541.74 836.36" stroke="#0034FF" stroke-width="1.150" stroke-linecap="butt"/><path d="M1541.74 836.36L1540.48 833.67" stroke="#0046FF" stroke-width="1.150" stroke-linecap="butt"/><path d="M1540.48 833.67L1539.16 830.98" stroke="#0059FF" stroke-width="1.150" stroke-linecap="butt"/><path d="M1539.16 830.98L1537.76 828.30" stroke="#006CFF" stroke-width="1.150" stroke-linecap="butt"/><path d="M1537.76 828.30L1536.29 825.64" stroke="#007FFF" stroke-width="1.150" stroke-linecap="butt"/><path d="M1536.29 825.64L1534.75 822.98" stroke="#0092FF" stroke-width="1.150" stroke-linecap="butt"/><path d="M1534.75 822.98L1533.15 820.33" stroke="#00A5FF" stroke-width="1.150" stroke-linecap="butt"/><path d="M1533.15 820.33L1531.47 817.70" stroke="#00B8FF" stroke-width="1.150" stroke-linecap="butt"/><path d="M1531.47 817.70L1529.73 815.07" stroke="#00CBFF" stroke-width="1.150" stroke-linecap="butt"/><path d="M1529.73 815.07L1527.92 812.46" stroke="#00DDFF" stroke-width="1.150" stroke-linecap="butt"/><path d="M1527.92 812.46L1526.04 809.86" stroke="#00F0FF" stroke-width="1.150" stroke-linecap="butt"/><path d="M1526.04 809.86L1524.09 807.27" stroke="#03FFFC" stroke-width="1.150" stroke-linecap="butt"/><path d="M1524.09 807.27L1522.07 804.69" stroke="#15FFEA" stroke-width="1.150" stroke-linecap="butt"/><path d="M1522.07 804.69L1519.99 802.13" stroke="#26FFD9" stroke-width="1.150" stroke-linecap="butt"/><path d="M1519.99 802.13L1517.84 799.58" stroke="#37FFC8" stroke-width="1.150" stroke-linecap="butt"/><path d="M1517.84 799.58L1515.62 797.04" stroke="#48FFB7" stroke-width="1.150" stroke-linecap="butt"/><path d="M1515.62 797.04L1513.34 794.52" stroke="#58FFA7" stroke-width="1.150" stroke-linecap="butt"/><path d="M1513.34 794.52L1510.99 792.02" stroke="#68FF97" stroke-width="1.150" stroke-linecap="butt"/><path d="M1510.99 792.02L1508.57 789.53" stroke="#78FF87" stroke-width="1.150" stroke-linecap="butt"/><path d="M1508.57 789.53L1506.09 787.06" stroke="#87FF78" stroke-width="1.150" stroke-linecap="butt"/><path d="M1506.09 787.06L1503.55 784.60" stroke="#95FF6A" stroke-width="1.150" stroke-linecap="butt"/><path d="M1503.55 784.60L1500.94 782.16" stroke="#A3FF5C" stroke-width="1.150" stroke-linecap="butt"/><path d="M1500.94 782.16L1498.27 779.74" stroke="#B1FF4E" stroke-width="1.150" stroke-linecap="butt"/><path d="M1498.27 779.74L1495.53 777.34" stroke="#BEFF41" stroke-width="1.150" stroke-linecap="butt"/><path d="M1495.53 777.34L1492.74 774.95" stroke="#CBFF34" stroke-width="1.150" stroke-linecap="butt"/><path d="M1492.74 774.95L1489.88 772.58" stroke="#D8FF27" stroke-width="1.150" stroke-linecap="butt"/><path d="M1489.88 772.58L1486.96 770.23" stroke="#E4FF1B" stroke-width="1.150" stroke-linecap="butt"/><path d="M1486.96 770.23L1483.97 767.90" stroke="#EFFF10" stroke-width="1.150" stroke-linecap="butt"/><path d="M1483.97 767.90L1480.93 765.59" stroke="#FAFF05" stroke-width="1.150" stroke-linecap="butt"/><path d="M1480.93 765.59L1477.83 763.30" stroke="#FFF900" stroke-width="1.150" stroke-linecap="butt"/><path d="M1477.83 763.30L1474.66 761.03" stroke="#FFEE00" stroke-width="1.150" stroke-linecap="butt"/><path d="M1474.66 761.03L1471.44 758.78" stroke="#FFE400" stroke-width="1.150" stroke-linecap="butt"/><path d="M1471.44 758.78L1468.16 756.56" stroke="#FFDB00" stroke-width="1.150" stroke-linecap="butt"/><path d="M1468.16 756.56L1464.82 754.35" stroke="#FFD100" stroke-width="1.150" stroke-linecap="butt"/><path d="M1464.82 754.35L1461.42 752.17" stroke="#FFC800" stroke-width="1.150" stroke-linecap="butt"/><path d="M1461.42 752.17L1457.97 750.01" stroke="#FFC000" stroke-width="1.150" stroke-linecap="butt"/><path d="M1457.97 750.01L1454.46 747.87" stroke="#FFB800" stroke-width="1.150" stroke-linecap="butt"/><path d="M1454.46 747.87L1450.89 745.75" stroke="#FFB000" stroke-width="1.150" stroke-linecap="butt"/><path d="M1450.89 745.75L1447.27 743.66" stroke="#FFA800" stroke-width="1.150" stroke-linecap="butt"/><path d="M1447.27 743.66L1443.60 741.59" stroke="#FFA000" stroke-width="1.150" stroke-linecap="butt"/><path d="M1443.60 741.59L1439.87 739.55" stroke="#FF9900" stroke-width="1.150" stroke-linecap="butt"/><path d="M1439.87 739.55L1436.09 737.53" stroke="#FF9300" stroke-width="1.150" stroke-linecap="butt"/><path d="M1436.09 737.53L1432.25 735.54" stroke="#FF8C00" stroke-width="1.150" stroke-linecap="butt"/><path d="M1432.25 735.54L1428.37 733.57" stroke="#FF8600" stroke-width="1.150" stroke-linecap="butt"/><path d="M1428.37 733.57L1424.43 731.62" stroke="#FF8000" stroke-width="1.150" stroke-linecap="butt"/><path d="M1424.43 731.62L1420.44 729.71" stroke="#FF7A00" stroke-width="1.150" stroke-linecap="butt"/><path d="M1420.44 729.71L1416.40 727.82" stroke="#FF7400" stroke-width="1.150" stroke-linecap="butt"/><path d="M1416.40 727.82L1412.31 725.95" stroke="#FF6F00" stroke-width="1.150" stroke-linecap="butt"/><path d="M1412.31 725.95L1408.18 724.11" stroke="#FF6900" stroke-width="1.150" stroke-linecap="butt"/><path d="M1408.18 724.11L1404.00 722.30" stroke="#FF6400" stroke-width="1.150" stroke-linecap="butt"/><path d="M1404.00 722.30L1399.77 720.52" stroke="#FF6000" stroke-width="1.150" stroke-linecap="butt"/><path d="M1399.77 720.52L1395.49 718.77" stroke="#FF5B00" stroke-width="1.150" stroke-linecap="butt"/><path d="M1395.49 718.77L1391.17 717.04" stroke="#FF5700" stroke-width="1.150" stroke-linecap="butt"/><path d="M1391.17 717.04L1386.80 715.34" stroke="#FF5200" stroke-width="1.150" stroke-linecap="butt"/><path d="M1386.80 715.34L1382.39 713.67" stroke="#FF4E00" stroke-width="1.150" stroke-linecap="butt"/><path d="M1382.39 713.67L1377.93 712.03" stroke="#FF4A00" stroke-width="1.150" stroke-linecap="butt"/><path d="M1377.93 712.03L1373.44 710.42" stroke="#FF4700" stroke-width="1.150" stroke-linecap="butt"/><path d="M1373.44 710.42L1368.90 708.84" stroke="#FF4300" stroke-width="1.150" stroke-linecap="butt"/><path d="M1368.90 708.84L1364.32 707.29" stroke="#FF3F00" stroke-width="1.150" stroke-linecap="butt"/><path d="M1364.32 707.29L1359.70 705.76" stroke="#FF3C00" stroke-width="1.150" stroke-linecap="butt"/><path d="M1359.70 705.76L1355.04 704.27" stroke="#FF3900" stroke-width="1.150" stroke-linecap="butt"/><path d="M1355.04 704.27L1350.34 702.81" stroke="#FF3600" stroke-width="1.150" stroke-linecap="butt"/><path d="M1350.34 702.81L1345.60 701.38" stroke="#FF3300" stroke-width="1.150" stroke-linecap="butt"/><path d="M1345.60 701.38L1340.83 699.98" stroke="#FF3000" stroke-width="1.150" stroke-linecap="butt"/><path d="M1340.83 699.98L1336.02 698.62" stroke="#FF2D00" stroke-width="1.150" stroke-linecap="butt"/><path d="M1336.02 698.62L1331.18 697.28" stroke="#FF2B00" stroke-width="1.150" stroke-linecap="butt"/><path d="M1331.18 697.28L1326.30 695.98" stroke="#FF2800" stroke-width="1.150" stroke-linecap="butt"/><path d="M1326.30 695.98L1321.38 694.70" stroke="#FF2600" stroke-width="1.150" stroke-linecap="butt"/><path d="M1321.38 694.70L1316.44 693.46" stroke="#FF2300" stroke-width="1.150" stroke-linecap="butt"/><path d="M1316.44 693.46L1311.46 692.26" stroke="#FF2100" stroke-width="1.150" stroke-linecap="butt"/><path d="M1311.46 692.26L1306.45 691.08" stroke="#FF1F00" stroke-width="1.150" stroke-linecap="butt"/><path d="M1306.45 691.08L1301.41 689.94" stroke="#FF1D00" stroke-width="1.150" stroke-linecap="butt"/><path d="M1301.41 689.94L1296.34 688.83" stroke="#FF1B00" stroke-width="1.150" stroke-linecap="butt"/><path d="M1296.34 688.83L1291.24 687.76" stroke="#FF1900" stroke-width="1.150" stroke-linecap="butt"/><path d="M1291.24 687.76L1286.12 686.71" stroke="#FF1700" stroke-width="1.150" stroke-linecap="butt"/><path d="M1286.12 686.71L1280.97 685.71" stroke="#FF1600" stroke-width="1.150" stroke-linecap="butt"/><path d="M1280.97 685.71L1275.79 684.73" stroke="#FF1400" stroke-width="1.150" stroke-linecap="butt"/><path d="M1275.79 684.73L1270.59 683.79" stroke="#FF1300" stroke-width="1.150" stroke-linecap="butt"/><path d="M1270.59 683.79L1265.36 682.89" stroke="#FF1100" stroke-width="1.150" stroke-linecap="butt"/><path d="M1265.36 682.89L1260.11 682.01" stroke="#FF1000" stroke-width="1.150" stroke-linecap="butt"/><path d="M1260.11 682.01L1254.84 681.18" stroke="#FF0E00" stroke-width="1.150" stroke-linecap="butt"/><path d="M1254.84 681.18L1249.54 680.37" stroke="#FF0D00" stroke-width="1.150" stroke-linecap="butt"/><path d="M1249.54 680.37L1244.23 679.60" stroke="#FF0C00" stroke-width="1.150" stroke-linecap="butt"/><path d="M1244.23 679.60L1238.89 678.87" stroke="#FF0B00" stroke-width="1.150" stroke-linecap="butt"/><path d="M1238.89 678.87L1233.54 678.17" stroke="#FF0A00" stroke-width="1.150" stroke-linecap="butt"/><path d="M1233.54 678.17L1228.17 677.51" stroke="#FF0900" stroke-width="1.150" stroke-linecap="butt"/><path d="M1228.17 677.51L1222.78 676.88" stroke="#FF0800" stroke-width="1.150" stroke-linecap="butt"/><path d="M1222.78 676.88L1217.38 676.29" stroke="#FF0700" stroke-width="1.150" stroke-linecap="butt"/><path d="M1217.38 676.29L1211.96 675.73" stroke="#FF0600" stroke-width="1.150" stroke-linecap="butt"/><path d="M1211.96 675.73L1206.52 675.21" stroke="#FF0500" stroke-width="1.150" stroke-linecap="butt"/><path d="M1206.52 675.21L1201.08 674.72" stroke="#FF0500" stroke-width="1.150" stroke-linecap="butt"/><path d="M1201.08 674.72L1195.62 674.27" stroke="#FF0400" stroke-width="1.150" stroke-linecap="butt"/><path d="M1195.62 674.27L1190.15 673.86" stroke="#FF0300" stroke-width="1.150" stroke-linecap="butt"/><path d="M1190.15 673.86L1184.67 673.48" stroke="#FF0300" stroke-width="1.150" stroke-linecap="butt"/><path d="M1184.67 673.48L1179.18 673.13" stroke="#FF0200" stroke-width="1.150" stroke-linecap="butt"/><path d="M1179.18 673.13L1173.68 672.83" stroke="#FF0200" stroke-width="1.150" stroke-linecap="butt"/><path d="M1173.68 672.83L1168.17 672.56" stroke="#FF0100" stroke-width="1.150" stroke-linecap="butt"/><path d="M1168.17 672.56L1162.66 672.32" stroke="#FF0100" stroke-width="1.150" stroke-linecap="butt"/><path d="M1162.66 672.32L1157.14 672.12" stroke="#FF0100" stroke-width="1.150" stroke-linecap="butt"/><path d="M1157.14 672.12L1151.62 671.96" stroke="#FF0100" stroke-width="1.150" stroke-linecap="butt"/><path d="M1151.62 671.96L1146.09 671.83" stroke="#FF0000" stroke-width="1.150" stroke-linecap="butt"/><path d="M1146.09 671.83L1140.56 671.74" stroke="#FF0000" stroke-width="1.150" stroke-linecap="butt"/><path d="M1140.56 671.74L1135.03 671.69" stroke="#FF0000" stroke-width="1.150" stroke-linecap="butt"/><path d="M1135.03 671.69L1129.50 671.67" stroke="#FF0000" stroke-width="1.150" stroke-linecap="butt"/><defs><linearGradient id="jet" x1="0" y1="0" x2="0" y2="1"><stop offset="0.0000" stop-color="#800000"/><stop offset="0.0250" stop-color="#990000"/><stop offset="0.0500" stop-color="#B30000"/><stop offset="0.0750" stop-color="#CC0000"/><stop offset="0.1000" stop-color="#E50000"/><stop offset="0.1250" stop-color="#FF0000"/><stop offset="0.1500" stop-color="#FF1A00"/><stop offset="0.1750" stop-color="#FF3300"/><stop offset="0.2000" stop-color="#FF4C00"/><stop offset="0.2250" stop-color="#FF6600"/><stop offset="0.2500" stop-color="#FF8000"/><stop offset="0.2750" stop-color="#FF9900"/><stop offset="0.3000" stop-color="#FFB300"/><stop offset="0.3250" stop-color="#FFCC00"/><stop offset="0.3500" stop-color="#FFE500"/><stop offset="0.3750" stop-color="#FFFF00"/><stop offset="0.4000" stop-color="#E5FF1A"/><stop offset="0.4250" stop-color="#CCFF33"/><stop offset="0.4500" stop-color="#B3FF4C"/><stop offset="0.4750" stop-color="#99FF66"/><stop offset="0.5000" stop-color="#80FF80"/><stop offset="0.5250" stop-color="#66FF99"/><stop offset="0.5500" stop-color="#4CFFB3"/><stop offset="0.5750" stop-color="#33FFCC"/><stop offset="0.6000" stop-color="#1AFFE5"/><stop offset="0.6250" stop-color="#00FFFF"/><stop offset="0.6500" stop-color="#00E5FF"/><stop offset="0.6750" stop-color="#00CCFF"/><stop offset="0.7000" stop-color="#00B3FF"/><stop offset="0.7250" stop-color="#0099FF"/><stop offset="0.7500" stop-color="#0080FF"/><stop offset="0.7750" stop-color="#0066FF"/><stop offset="0.8000" stop-color="#004CFF"/><stop offset="0.8250" stop-color="#0033FF"/><stop offset="0.8500" stop-color="#001AFF"/><stop offset="0.8750" stop-color="#0000FF"/><stop offset="0.9000" stop-color="#0000E5"/><stop offset="0.9250" stop-color="#0000CC"/><stop offset="0.9500" stop-color="#0000B3"/><stop offset="0.9750" stop-color="#000099"/><stop offset="1.0000" stop-color="#000080"/></linearGradient></defs><rect x="1845" y="260.500" width="16" height="637" fill="url(#jet)"/><path d="M1845.400 260.500v637M1860.600 260.500v637" stroke="#000" stroke-opacity=".55" stroke-width=".9"/><path d="M1845 260.700h3.500M1861 260.700h-3.500" stroke="#200000" stroke-width="1.300"/><path d="M1845 324.90h3M1861 324.90h-3" stroke="#000" stroke-width="1.300"/><path d="M1845 388.40h3M1861 388.40h-3" stroke="#000" stroke-width="1.300"/><path d="M1845 451.90h3M1861 451.90h-3" stroke="#000" stroke-width="1.300"/><path d="M1845 515.40h3M1861 515.40h-3" stroke="#000" stroke-width="1.300"/><path d="M1845 578.90h3M1861 578.90h-3" stroke="#000" stroke-width="1.300"/><path d="M1845 642.40h3M1861 642.40h-3" stroke="#000" stroke-width="1.300"/><path d="M1845 705.90h3M1861 705.90h-3" stroke="#000" stroke-width="1.300"/><path d="M1845 769.40h3M1861 769.40h-3" stroke="#000" stroke-width="1.300"/><path d="M1845 832.90h3M1861 832.90h-3" stroke="#000" stroke-width="1.300"/></svg>
<span class="a t" style="letter-spacing:0.315px;left:1401.5px;top:209.00px;height:17px;line-height:17px;font-size:13px;color:#000;">Line: Curvature</span>
<span class="a t" style="letter-spacing:0.000px;left:1022.5px;top:221.70px;height:16.6px;line-height:16.6px;font-size:12.6px;color:#000;">m</span>
<span class="a t" style="letter-spacing:0.000px;left:1815.5px;top:908.70px;height:16.6px;line-height:16.6px;font-size:12.6px;color:#000;">m</span>
<span class="a t" style="letter-spacing:0.000px;left:1057.5px;top:874.70px;height:16.6px;line-height:16.6px;font-size:12.6px;color:#000;">0</span>
<span class="a t" style="letter-spacing:0.942px;left:1045.7px;top:832.43px;height:16.6px;line-height:16.6px;font-size:12.6px;color:#000;">0.2</span>
<span class="a t" style="letter-spacing:0.942px;left:1045.7px;top:790.17px;height:16.6px;line-height:16.6px;font-size:12.6px;color:#000;">0.4</span>
<span class="a t" style="letter-spacing:0.942px;left:1045.7px;top:747.90px;height:16.6px;line-height:16.6px;font-size:12.6px;color:#000;">0.6</span>
<span class="a t" style="letter-spacing:0.942px;left:1045.7px;top:705.64px;height:16.6px;line-height:16.6px;font-size:12.6px;color:#000;">0.8</span>
<span class="a t" style="letter-spacing:0.000px;left:1057.5px;top:663.37px;height:16.6px;line-height:16.6px;font-size:12.6px;color:#000;">1</span>
<span class="a t" style="letter-spacing:0.942px;left:1045.7px;top:621.10px;height:16.6px;line-height:16.6px;font-size:12.6px;color:#000;">1.2</span>
<span class="a t" style="letter-spacing:0.942px;left:1045.7px;top:578.84px;height:16.6px;line-height:16.6px;font-size:12.6px;color:#000;">1.4</span>
<span class="a t" style="letter-spacing:0.942px;left:1045.7px;top:536.57px;height:16.6px;line-height:16.6px;font-size:12.6px;color:#000;">1.6</span>
<span class="a t" style="letter-spacing:0.942px;left:1045.7px;top:494.31px;height:16.6px;line-height:16.6px;font-size:12.6px;color:#000;">1.8</span>
<span class="a t" style="letter-spacing:0.000px;left:1057.5px;top:452.04px;height:16.6px;line-height:16.6px;font-size:12.6px;color:#000;">2</span>
<span class="a t" style="letter-spacing:0.942px;left:1045.7px;top:409.77px;height:16.6px;line-height:16.6px;font-size:12.6px;color:#000;">2.2</span>
<span class="a t" style="letter-spacing:0.942px;left:1045.7px;top:367.51px;height:16.6px;line-height:16.6px;font-size:12.6px;color:#000;">2.4</span>
<span class="a t" style="letter-spacing:0.942px;left:1045.7px;top:325.24px;height:16.6px;line-height:16.6px;font-size:12.6px;color:#000;">2.6</span>
<span class="a t" style="letter-spacing:0.942px;left:1045.7px;top:282.98px;height:16.6px;line-height:16.6px;font-size:12.6px;color:#000;">2.8</span>
<span class="a t" style="letter-spacing:0.000px;left:1057.5px;top:240.71px;height:16.6px;line-height:16.6px;font-size:12.6px;color:#000;">3</span>
<span class="a t" style="letter-spacing:0.000px;left:1126.8999999999999px;top:908.70px;height:16.6px;line-height:16.6px;font-size:12.6px;color:#000;">0</span>
<span class="a t" style="letter-spacing:0.942px;left:1226.665px;top:908.70px;height:16.6px;line-height:16.6px;font-size:12.6px;color:#000;">0.5</span>
<span class="a t" style="letter-spacing:0.000px;left:1338.2299999999998px;top:908.70px;height:16.6px;line-height:16.6px;font-size:12.6px;color:#000;">1</span>
<span class="a t" style="letter-spacing:0.942px;left:1437.995px;top:908.70px;height:16.6px;line-height:16.6px;font-size:12.6px;color:#000;">1.5</span>
<span class="a t" style="letter-spacing:0.000px;left:1549.56px;top:908.70px;height:16.6px;line-height:16.6px;font-size:12.6px;color:#000;">2</span>
<span class="a t" style="letter-spacing:0.942px;left:1649.325px;top:908.70px;height:16.6px;line-height:16.6px;font-size:12.6px;color:#000;">2.5</span>
<span class="a t" style="letter-spacing:0.000px;left:1760.8899999999999px;top:908.70px;height:16.6px;line-height:16.6px;font-size:12.6px;color:#000;">3</span>
<span class="a t" style="letter-spacing:0.000px;left:1869.6px;top:252.20px;height:16.6px;line-height:16.6px;font-size:12.6px;color:#000;">0</span>
<span class="a t" style="letter-spacing:0.766px;left:1869.6px;top:316.20px;height:16.6px;line-height:16.6px;font-size:12.6px;color:#000;">-0.2</span>
<span class="a t" style="letter-spacing:0.766px;left:1869.6px;top:379.70px;height:16.6px;line-height:16.6px;font-size:12.6px;color:#000;">-0.4</span>
<span class="a t" style="letter-spacing:0.766px;left:1869.6px;top:443.20px;height:16.6px;line-height:16.6px;font-size:12.6px;color:#000;">-0.6</span>
<span class="a t" style="letter-spacing:0.766px;left:1869.6px;top:506.70px;height:16.6px;line-height:16.6px;font-size:12.6px;color:#000;">-0.8</span>
<span class="a t" style="letter-spacing:0.897px;left:1869.6px;top:570.20px;height:16.6px;line-height:16.6px;font-size:12.6px;color:#000;">-1</span>
<span class="a t" style="letter-spacing:0.766px;left:1869.6px;top:633.70px;height:16.6px;line-height:16.6px;font-size:12.6px;color:#000;">-1.2</span>
<span class="a t" style="letter-spacing:0.766px;left:1869.6px;top:697.20px;height:16.6px;line-height:16.6px;font-size:12.6px;color:#000;">-1.4</span>
<span class="a t" style="letter-spacing:0.766px;left:1869.6px;top:760.70px;height:16.6px;line-height:16.6px;font-size:12.6px;color:#000;">-1.6</span>
<span class="a t" style="letter-spacing:0.766px;left:1869.6px;top:824.20px;height:16.6px;line-height:16.6px;font-size:12.6px;color:#000;">-1.8</span>
<span class="a t" style="letter-spacing:0.897px;left:1869.6px;top:888.60px;height:16.6px;line-height:16.6px;font-size:12.6px;color:#000;">-2</span>
<svg class="a" style="left:1891px;top:202px;" width="20" height="20" viewBox="0 0 20 20"><path d="M2 5l11-3 6 4-2 11-12 2z" fill="#ECEDF0"/><rect x="4" y="5" width="13" height="10" rx="2.500" fill="#1D3F8C"/><path d="M6.500 7h6l2 3-2 3h-6z" fill="#F5E24A"/><path d="M6.500 10h8v3h-8z" fill="#3FA6E0" opacity=".75"/></svg>
<div class="a" style="left:966px;top:353px;width:600px;height:400px;background:#fff;border:1px solid #A9C7EA;box-sizing:border-box;"></div>
<div class="a" style="left:1563px;top:356px;width:2px;height:395px;background:#666;"></div>
<div class="a" style="left:967px;top:749px;width:598px;height:2px;background:#666;"></div>
<div class="a" style="left:1561px;top:356px;width:2px;height:393px;background:#F0F0F0;"></div>
<div class="a" style="left:967px;top:747px;width:594px;height:2px;background:#F0F0F0;"></div>
<svg class="a" style="left:1556px;top:742px;" width="8" height="8" viewBox="0 0 8 8"><path d="M1 7.500l6.500-6.500M4 7.500l3.500-3.500" stroke="#888" stroke-width="1"/></svg>
<div class="a" style="left:972px;top:359px;width:584px;height:19px;background:#fff;border:1px solid #D0D0D0;box-sizing:border-box;"></div>
<div class="a" style="left:975px;top:360.5px;width:74.5px;height:15px;background:#9CC8EE;"></div>
<span class="a t" style="letter-spacing:-0.060px;left:976px;top:359.50px;height:16px;line-height:16px;font-size:12px;color:#1B3A6B;">Type filter text</span>
<div class="a" style="left:972px;top:384px;width:584px;height:342px;background:#fff;border:1px solid #D0D0D0;box-sizing:border-box;"></div>
<div class="a" style="left:973px;top:385px;width:565px;height:18px;background:#DBDBDD;"></div>
<div class="a" style="left:973px;top:475px;width:565px;height:18px;background:#E1F0FC;"></div>
<div class="a" style="left:1538px;top:385px;width:17px;height:340px;background:#F0F0F0;"></div>
<div class="a" style="left:1538px;top:402px;width:17px;height:290px;background:#CDCDCD;"></div>
<svg class="a" style="left:1538px;top:385px;" width="17" height="340" viewBox="0 0 17 340"><path d="M5 11.500l3.500-3.500 3.500 3.500" fill="none" stroke="#8A8A8A" stroke-width="1.200"/><path d="M5 329.500l3.500 3.500 3.500-3.500" fill="none" stroke="#8A8A8A" stroke-width="1.200"/></svg>
<span class="a t" style="letter-spacing:-0.069px;left:999.5px;top:386.00px;height:16px;line-height:16px;font-size:12px;color:#000;">curv_spatial - Curvature</span>
<span class="a t" style="letter-spacing:0.403px;left:999.5px;top:404.00px;height:16px;line-height:16px;font-size:12px;color:#000;">Model</span>
<span class="a t" style="letter-spacing:-0.127px;left:1019.5px;top:422.00px;height:16px;line-height:16px;font-size:12px;color:#000;">Geometry</span>
<span class="a t" style="letter-spacing:-0.162px;left:1039.5px;top:440.00px;height:16px;line-height:16px;font-size:12px;color:#000;">Curvature (Spatial)</span>
<span class="a t" style="letter-spacing:0.026px;left:1059.5px;top:458.00px;height:16px;line-height:16px;font-size:12px;color:#000;">Principal curvature direction</span>
<span class="a t" style="letter-spacing:-0.091px;left:1059.5px;top:476.00px;height:16px;line-height:16px;font-size:12px;color:#000;">curv_spatial - Curvature</span>
<span class="a t" style="letter-spacing:0.074px;left:1039.5px;top:494.00px;height:16px;line-height:16px;font-size:12px;color:#000;">dom - Entity index</span>
<span class="a t" style="letter-spacing:0.043px;left:1019.5px;top:512.00px;height:16px;line-height:16px;font-size:12px;color:#000;">Global definitions</span>
<span class="a t" style="letter-spacing:-0.048px;left:1019.5px;top:530.00px;height:16px;line-height:16px;font-size:12px;color:#000;">Materials</span>
<span class="a t" style="letter-spacing:-0.181px;left:1019.5px;top:548.00px;height:16px;line-height:16px;font-size:12px;color:#000;">Mesh</span>
<span class="a t" style="letter-spacing:0.025px;left:1019.5px;top:566.00px;height:16px;line-height:16px;font-size:12px;color:#000;">Component 1</span>
<span class="a t" style="letter-spacing:0.077px;left:1039.5px;top:584.00px;height:16px;line-height:16px;font-size:12px;color:#000;">Definitions</span>
<span class="a t" style="letter-spacing:-0.127px;left:1039.5px;top:602.00px;height:16px;line-height:16px;font-size:12px;color:#000;">Geometry</span>
<span class="a t" style="letter-spacing:-0.158px;left:1039.5px;top:620.00px;height:16px;line-height:16px;font-size:12px;color:#000;">Electrostatics</span>
<span class="a t" style="letter-spacing:0.110px;left:999.5px;top:638.00px;height:16px;line-height:16px;font-size:12px;color:#000;">Built in</span>
<span class="a t" style="letter-spacing:0.059px;left:1019.5px;top:656.00px;height:16px;line-height:16px;font-size:12px;color:#000;">Mathematical constants</span>
<span class="a t" style="letter-spacing:0.170px;left:1019.5px;top:674.00px;height:16px;line-height:16px;font-size:12px;color:#000;">Mathematical functions</span>
<span class="a t" style="letter-spacing:-0.132px;left:1019.5px;top:692.00px;height:16px;line-height:16px;font-size:12px;color:#000;">Operators</span>
<span class="a t" style="letter-spacing:-0.123px;left:1019.5px;top:710.00px;height:16px;line-height:16px;font-size:12px;color:#000;">Physical constants</span>
<svg class="a" style="left:973px;top:385px;" width="120" height="340" viewBox="973 385 120 340"><path d="M985.6 407.4v6.400h-7z" fill="#222"/><path d="M1005.6 425.4v6.400h-7z" fill="#222"/><path d="M1025.6 443.4v6.400h-7z" fill="#222"/><path d="M1040.5 461.5v9l4.500-4.500z" fill="#fff" stroke="#A0A0A0" stroke-width="1"/><path d="M1000.5 515.5v9l4.500-4.500z" fill="#fff" stroke="#A0A0A0" stroke-width="1"/><path d="M1000.5 533.5v9l4.500-4.500z" fill="#fff" stroke="#A0A0A0" stroke-width="1"/><path d="M1000.5 551.5v9l4.500-4.500z" fill="#fff" stroke="#A0A0A0" stroke-width="1"/><path d="M1005.6 569.4v6.400h-7z" fill="#222"/><path d="M1020.5 587.5v9l4.500-4.500z" fill="#fff" stroke="#A0A0A0" stroke-width="1"/><path d="M1020.5 605.5v9l4.500-4.500z" fill="#fff" stroke="#A0A0A0" stroke-width="1"/><path d="M1020.5 623.5v9l4.500-4.500z" fill="#fff" stroke="#A0A0A0" stroke-width="1"/><path d="M985.6 641.4v6.400h-7z" fill="#222"/><path d="M1000.5 659.5v9l4.500-4.500z" fill="#fff" stroke="#A0A0A0" stroke-width="1"/><path d="M1000.5 677.5v9l4.500-4.500z" fill="#fff" stroke="#A0A0A0" stroke-width="1"/><path d="M1000.5 695.5v9l4.500-4.500z" fill="#fff" stroke="#A0A0A0" stroke-width="1"/><path d="M1000.5 713.5v9l4.500-4.500z" fill="#fff" stroke="#A0A0A0" stroke-width="1"/></svg>
<span class="a t" style="letter-spacing:-0.142px;left:970px;top:731.50px;height:16px;line-height:16px;font-size:12px;color:#000;">Double-click or press Enter to add selected expression.</span>
<div class="a" style="left:1024px;top:938px;width:89px;height:24px;background:#FAFBFE;border:1px solid #D4D5D9;box-sizing:border-box;border-bottom:none;"></div>
<div class="a" style="left:1020px;top:961px;width:896px;height:1px;background:#D4D5D9;"></div>
<div class="a" style="left:1025px;top:961px;width:87px;height:1px;background:#FAFBFE;"></div>
<span class="a t" style="letter-spacing:-0.319px;left:1029px;top:943.25px;height:17.5px;line-height:17.5px;font-size:13.5px;color:#2B579A;">Messages</span>
<svg class="a" style="left:1096px;top:945px;" width="10" height="10" viewBox="0 0 10 10"><path d="M1.500 1.500l7 7M8.500 1.500l-7 7" stroke="#C9CCD3" stroke-width="1.100"/></svg>
<div class="a" style="left:1121px;top:938px;width:60px;height:23px;background:#ECECEE;"></div>
<span class="a t" style="letter-spacing:-0.247px;left:1125px;top:942.25px;height:17.5px;line-height:17.5px;font-size:13.5px;color:#111;">Progress</span>
<div class="a" style="left:1189px;top:938px;width:30px;height:23px;background:#ECECEE;"></div>
<span class="a t" style="letter-spacing:-0.366px;left:1193.5px;top:942.25px;height:17.5px;line-height:17.5px;font-size:13.5px;color:#111;">Log</span>
<div class="a" style="left:1227px;top:938px;width:59px;height:23px;background:#ECECEE;"></div>
<span class="a t" style="letter-spacing:-0.245px;left:1231px;top:942.25px;height:17.5px;line-height:17.5px;font-size:13.5px;color:#111;">Table</span>
<svg class="a" style="left:1269px;top:944px;" width="10" height="10" viewBox="0 0 10 10"><path d="M1.500 1.500l7 7M8.500 1.500l-7 7" stroke="#C9CCD3" stroke-width="1.100"/></svg>
<svg class="a" style="left:1888px;top:944px;" width="26" height="14" viewBox="0 0 26 14"><path d="M1 4h8l-4 4z" fill="#D3D7E0"/><path d="M17.500 2h5v5h-5zM16.500 7.500h7M20 7.500v4.500" stroke="#D3D7E0" fill="#D3D7E0" stroke-width="1"/></svg>
<svg class="a" style="left:1027px;top:967px;" width="14" height="19" viewBox="0 0 14 19"><path d="M2 1.500l5 9" stroke="#4A3A2A" stroke-width="1.500"/><path d="M4 11l5-2.500 3.500 8-5 1.500z" fill="#EBCB9E" stroke="#B98B55" stroke-width=".7"/></svg>
<div class="a" style="left:1024px;top:990px;width:888px;height:134px;background:#FAFBFE;border:1px solid #D4D5D9;box-sizing:border-box;"></div>
<div class="a" style="left:1894px;top:991px;width:17px;height:132px;background:#F0F0F0;"></div>
<div class="a" style="left:1894px;top:1020px;width:17px;height:86px;background:#CDCDCD;"></div>
<svg class="a" style="left:1894px;top:991px;" width="17" height="132" viewBox="0 0 17 132"><path d="M5 10l3.500-3.500 3.500 3.500" fill="none" stroke="#8A8A8A" stroke-width="1.200"/><path d="M5 121l3.500 3.500 3.500-3.500" fill="none" stroke="#8A8A8A" stroke-width="1.200"/></svg>
<span class="a t" style="letter-spacing:-0.391px;left:1027.3px;top:987.50px;height:16px;line-height:16px;font-size:12px;color:#111;">[Sep 23, 2019 10:09 AM]</span>
<span class="a t" style="letter-spacing:-0.113px;left:1154.3px;top:987.50px;height:16px;line-height:16px;font-size:12px;color:#111;">Your COMSOL 5.4 installation is up to date.</span>
<span class="a t" style="letter-spacing:-0.351px;left:1027.3px;top:1002.50px;height:16px;line-height:16px;font-size:12px;color:#111;">[Sep 23, 2019 10:11 AM]</span>
<span class="a t" style="letter-spacing:-0.154px;left:1154.3px;top:1002.50px;height:16px;line-height:16px;font-size:12px;color:#111;">Finalized geometry has 2 domains, 7 boundaries, and 6 vertices.</span>
<span class="a t" style="letter-spacing:-0.351px;left:1027.3px;top:1017.50px;height:16px;line-height:16px;font-size:12px;color:#111;">[Sep 23, 2019 10:11 AM]</span>
<span class="a t" style="letter-spacing:-0.077px;left:1154.3px;top:1017.50px;height:16px;line-height:16px;font-size:12px;color:#111;">Complete mesh consists of 656 domain elements and 72 boundary elements.</span>
<span class="a t" style="letter-spacing:-0.351px;left:1027.3px;top:1032.50px;height:16px;line-height:16px;font-size:12px;color:#111;">[Sep 23, 2019 10:11 AM]</span>
<span class="a t" style="letter-spacing:-0.077px;left:1154.3px;top:1032.50px;height:16px;line-height:16px;font-size:12px;color:#111;">Number of degrees of freedom solved for: 1375.</span>
<span class="a t" style="letter-spacing:-0.351px;left:1027.3px;top:1047.50px;height:16px;line-height:16px;font-size:12px;color:#111;">[Sep 23, 2019 10:11 AM]</span>
<span class="a t" style="letter-spacing:-0.122px;left:1154.3px;top:1047.50px;height:16px;line-height:16px;font-size:12px;color:#111;">Solution time (Study 1): 3 s.</span>
<span class="a t" style="letter-spacing:-0.391px;left:1027.3px;top:1062.50px;height:16px;line-height:16px;font-size:12px;color:#111;">[Sep 23, 2019 10:15 AM]</span>
<span class="a t" style="letter-spacing:-0.154px;left:1154.3px;top:1062.50px;height:16px;line-height:16px;font-size:12px;color:#111;">Finalized geometry has 2 domains, 7 boundaries, and 6 vertices.</span>
<span class="a t" style="letter-spacing:-0.391px;left:1027.3px;top:1077.50px;height:16px;line-height:16px;font-size:12px;color:#111;">[Sep 23, 2019 10:15 AM]</span>
<span class="a t" style="letter-spacing:-0.077px;left:1154.3px;top:1077.50px;height:16px;line-height:16px;font-size:12px;color:#111;">Number of degrees of freedom solved for: 1345.</span>
<span class="a t" style="letter-spacing:-0.391px;left:1027.3px;top:1092.50px;height:16px;line-height:16px;font-size:12px;color:#111;">[Sep 23, 2019 10:15 AM]</span>
<span class="a t" style="letter-spacing:-0.122px;left:1154.3px;top:1092.50px;height:16px;line-height:16px;font-size:12px;color:#111;">Solution time (Study 1): 2 s.</span>
</body></html>
